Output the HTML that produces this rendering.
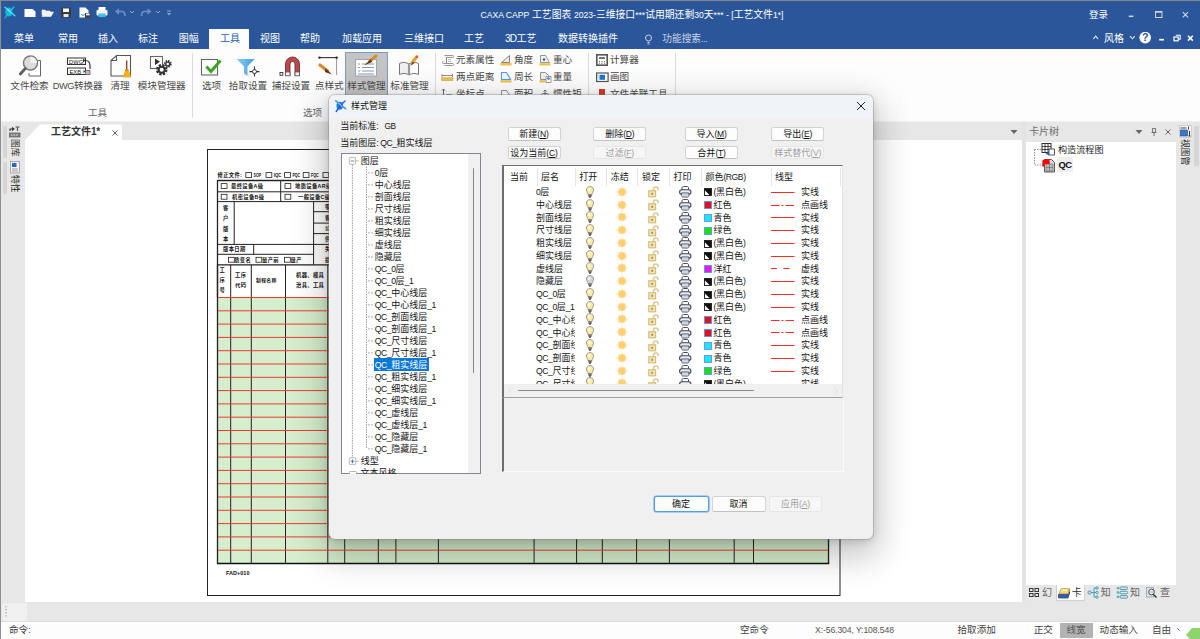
<!DOCTYPE html>
<html lang="zh"><head><meta charset="utf-8"><title>CAXA CAPP</title>
<style>
html,body{margin:0;padding:0}
body{width:1200px;height:639px;overflow:hidden;position:relative;background:#fff;
 font-family:"Liberation Sans","Noto Sans CJK SC",sans-serif;font-size:9.6px;color:#262626;line-height:12px}
div,span,svg{position:absolute;box-sizing:border-box}
.t{white-space:nowrap;line-height:12px;height:12px}
.w{color:#fff}
#title{left:0;top:0;width:1200px;height:49px;background:#2b579a}
#ribbon{left:0;top:49px;width:1200px;height:73px;background:#fdfdfd}
.rl{font-size:9.6px;color:#484848}
.rl i{font-size:.96em;letter-spacing:-.45px}
.gl{font-size:9.6px;color:#666}
.sep{width:1px;background:#dcdcdc}
#dlg{left:328px;top:94px;width:545px;height:445px;background:#f0f0f0;border-radius:6px;
 box-shadow:0 0 0 1px rgba(120,120,120,.32),0 12px 34px 5px rgba(0,0,0,.24),0 2px 9px rgba(0,0,0,.15)}
#dlgt{left:0;top:0;width:545px;height:23px;background:#f0f4f9;border-radius:6px 6px 0 0}
.d{font-size:9px;color:#151515}
.btn{height:14px;border:1px solid #d3d3d3;border-bottom-color:#c2c2c2;border-radius:2.5px;background:#fdfdfd;font-size:9px;color:#111;text-align:center;line-height:12px;white-space:nowrap}
.btn.dis{color:#a0a0a0;background:#f6f6f6;border-color:#e6e6e6}
.btn i{font-size:.95em;letter-spacing:-.2px}
.btn.def{border-color:#569ee0;box-shadow:0 0 0 .6px #6aaae6}
i{font-style:normal;font-size:.96em;letter-spacing:-.45px}
.ti i{font-size:.88em;letter-spacing:0}
.mn i{font-size:1em;letter-spacing:-.7px}
.nb i{font-size:1em;letter-spacing:-.3px}
.st i{font-size:.93em;letter-spacing:-.1px}
u{text-decoration:underline;text-decoration-thickness:.6px;text-underline-offset:1px}
</style></head><body>

<div id="title"></div>
<div class="" style="left:0px;top:0px;width:1200px;height:1px;background:#82878f"></div>
<span class="t w ti" style="left:480.5px;top:8.5px;font-size:9.8px;"><i>CAXA CAPP</i> 工艺图表 <i>2023-</i>三维接口<i>***</i>试用期还剩<i>30</i>天<i>*** - [</i>工艺文件<i>1*]</i></span>
<span class="t w" style="left:1089px;top:9px;font-size:9.6px;">登录</span>
<svg style="left:1120px;top:5px" width="80" height="20" viewBox="0 0 80 20"><g stroke="#d0d8e8" stroke-width="1" fill="none"><path d="M8.800 11.300h4.600" stroke-width="1.500"/><rect x="35.500" y="6.500" width="6.500" height="6"/><path d="M35.500 7h6.500" stroke-width="1.400"/><path d="M62.800 7.200l5.200 5.200M68 7.200l-5.200 5.200" stroke-width="1.100"/></g></svg>
<span class="t w mn" style="left:14px;top:33px;font-size:10px;">菜单</span>
<span class="t w mn" style="left:58px;top:33px;font-size:10px;">常用</span>
<span class="t w mn" style="left:98px;top:33px;font-size:10px;">插入</span>
<span class="t w mn" style="left:138px;top:33px;font-size:10px;">标注</span>
<span class="t w mn" style="left:178.8px;top:33px;font-size:10px;">图幅</span>
<span class="t w mn" style="left:260px;top:33px;font-size:10px;">视图</span>
<span class="t w mn" style="left:300px;top:33px;font-size:10px;">帮助</span>
<span class="t w mn" style="left:342px;top:33px;font-size:10px;">加载应用</span>
<span class="t w mn" style="left:404px;top:33px;font-size:10px;">三维接口</span>
<span class="t w mn" style="left:464px;top:33px;font-size:10px;">工艺</span>
<span class="t w mn" style="left:505px;top:33px;font-size:10px;"><i>3D</i>工艺</span>
<span class="t w mn" style="left:558px;top:33px;font-size:10px;">数据转换插件</span>
<div class="" style="left:209.4px;top:29.2px;width:39.2px;height:20px;background:#fdfdfd"></div>
<span class="t " style="left:220px;top:33.2px;font-size:10px;color:#2a62b8">工具</span>
<span class="t mn" style="left:662.3px;top:33px;font-size:9.7px;color:#c9d3e6">功能搜索<i>...</i></span>
<svg style="left:643px;top:33px" width="12" height="13" viewBox="0 0 12 13"><g stroke="#c9d3e6" fill="none" stroke-width="1"><circle cx="5.5" cy="5" r="3"/><path d="M4.5 9.5h2M4.5 11h2"/></g></svg>
<span class="t w" style="left:1104px;top:33px;font-size:10px;">风格</span>
<svg style="left:1088px;top:32px" width="112" height="16" viewBox="0 0 112 16"><g stroke="#e8edf6" fill="none" stroke-width="1.100"><path d="M5.300 7l2.400-2.800 2.400 2.800"/><path d="M42 4.200l2.400 2.600 2.400-2.600"/><path d="M71.200 7.700h4.700" stroke-width="1.700" stroke="#fff"/><rect x="86" y="5" width="4.200" height="3.800" stroke="#fff" stroke-width="1.200"/><path d="M87.800 3.300h4.400v4h-1.500" stroke="#fff"/><path d="M100 3.800l4.800 4.800M104.800 3.800l-4.800 4.800" stroke-width="1.500" stroke="#fff"/></g><circle cx="57.200" cy="5.600" r="5.800" fill="#fff"/><text x="57.200" y="9.300" text-anchor="middle" font-size="10.500" font-weight="bold" fill="#2b579a" font-family="Liberation Sans,sans-serif">?</text></svg>
<div id="ribbon"></div>
<div class="" style="left:0px;top:121px;width:1200px;height:1px;background:#f1f1f1"></div>
<svg style="left:0;top:0" width="180" height="30" viewBox="0 0 180 30">
<g>
<ellipse cx="8.8" cy="12" rx="3.6" ry="4.6" fill="#1cb4d4"/>
<path d="M5 7.2l9.800 8.600" stroke="#38e4f4" stroke-width="1.500" stroke-linecap="round"/>
<path d="M13.800 7l-4.500 5.500-4.300 5.300" stroke="#12c8e0" stroke-width="1.300" stroke-linecap="round" fill="none"/>
<path d="M7.500 9.500c1.500.5 2.500 1.500 3 3" stroke="#bff6fb" stroke-width=".9" fill="none"/>
<path d="M6 15.500l-1.200 2.300" stroke="#0a8fb0" stroke-width="1.200"/>

<path d="M24.500 9h8l3 2.500v5.500h-11z" fill="#fff"/>
<path d="M42 16.500l2-4.500h9.500l-2.500 4.500zM42 15v-5h3l1 1h4v1" fill="#f2f2f2" stroke="#f2f2f2" stroke-width=".6"/>
<rect x="61" y="7.500" width="10" height="10" rx="1" fill="#3a3a3a"/><rect x="63" y="8.500" width="6" height="3.500" fill="#fff"/><rect x="63.500" y="14" width="5" height="3" fill="#e8e8e8"/>
<path d="M79.500 7.500h6l3 3v7h-9z" fill="#fff"/><rect x="85" y="13" width="5.500" height="5" fill="#444"/><rect x="86" y="13.500" width="3.500" height="1.800" fill="#fff"/><path d="M81 14c1 1.500 2.500 1.500 4 .5" stroke="#2b7fd0" fill="none"/>
<rect x="98.500" y="7" width="7" height="4" fill="#fff"/><rect x="96.500" y="10" width="11" height="5.500" rx="1" fill="#f4f4f4"/><rect x="98.500" y="13.500" width="7" height="3.500" fill="#3fc1ea"/>
</g>
<g fill="none" stroke="#6f8fc2" stroke-width="1.6"><path d="M117 11.500h5c2.500 0 3 2 3 4.500"/><path d="M149.500 11.500h-5c-2.500 0-3 2-3 4.500"/></g>
<path d="M115 11.500l4-3.200v6.400z M151.500 11.500l-4-3.200v6.400z" fill="#6f8fc2"/>
<g fill="none" stroke="#8fa8d0" stroke-width="1"><path d="M130 11l2 2 2-2M156 11l2 2 2-2"/><path d="M167 11h4"/></g>
<path d="M167 13h4l-2 2.500z" fill="#8fa8d0"/>
</svg>
<div class="" style="left:345px;top:52.4px;width:42.6px;height:47px;background:#c4c4c4;border:1px solid #8299c0"></div>
<svg style="left:16.5px;top:52px" width="30" height="30" viewBox="0 0 30 30"><path d="M14.500 8.500h9v15.500h-11.500v-3" fill="#fff" stroke="#666" stroke-width="1"/><circle cx="13.500" cy="11" r="7" fill="#dcdcdc" stroke="#7a7a7a" stroke-width="1.500"/><path d="M13.500 4.500a6.500 6.500 0 0 1 6.500 6.500h-6.500z" fill="#f1f1f1"/><path d="M8.300 16.500l-5 5.500" stroke="#5f5f5f" stroke-width="2.800" stroke-linecap="round"/></svg>
<span class="t rl" style="left:-10.5px;top:79.600px;width:80px;text-align:center">文件检索</span>
<svg style="left:63.5px;top:52px" width="30" height="30" viewBox="0 0 30 30"><rect x="3.500" y="6" width="18" height="6.500" fill="#fff" stroke="#333"/><rect x="3.500" y="16" width="18" height="6.500" fill="#fff" stroke="#333"/><text x="5" y="11.500" font-size="5.800" fill="#222" font-family="Liberation Sans,sans-serif">DWG</text><text x="5.500" y="21.500" font-size="5.800" fill="#222" font-family="Liberation Sans,sans-serif">EXB</text><path d="M21.500 8.500c3.500 0 4.500 2.500 4.500 5.500v3" fill="none" stroke="#333" stroke-width="1.200"/><path d="M19 6.500l2.500 2-2.500 2z" fill="#333"/><path d="M21.500 18.500h4.500v4h-4.500" fill="#bbb" stroke="#555" stroke-width=".8"/><path d="M19.500 18l2 1.500-2 1.500" fill="#333"/></svg>
<span class="t rl" style="left:37.7px;top:79.600px;width:80px;text-align:center"><i>DWG</i>转换器</span>
<svg style="left:105.5px;top:52px" width="30" height="30" viewBox="0 0 30 30"><path d="M5 24v-15.500l5.500-5h14v20.500z" fill="#fff" stroke="#555" stroke-width="1.100"/><path d="M5 8.500h5.500v-5" fill="none" stroke="#555" stroke-width="1.100"/><path d="M20.700 8.500v9" stroke="#8a3a1a" stroke-width="1.300"/><path d="M17 25.500l2.200-8.200h3l3.200 8.200z" fill="#f2b01e"/><path d="M19.200 17.300h3l.6 1.600h-4z" fill="#d98c14"/></svg>
<span class="t rl" style="left:80px;top:79.600px;width:80px;text-align:center">清理</span>
<svg style="left:146px;top:52px" width="30" height="30" viewBox="0 0 30 30"><rect x="4.500" y="4.500" width="12" height="12" fill="#fff" stroke="#666" stroke-width="1.100"/><path d="M9 6.500v6.500l5-3.200z" fill="#333"/><circle cx="15.700" cy="17.700" r="5.300" fill="#fff"/><circle cx="15.700" cy="17.700" r="4.600" fill="none" stroke="#333" stroke-width="2.400" stroke-dasharray="2.300 1.310"/><circle cx="15.700" cy="17.700" r="3" fill="none" stroke="#333" stroke-width="1.900"/><circle cx="21.700" cy="12" r="3.800" fill="#fff"/><circle cx="21.700" cy="12" r="3.100" fill="none" stroke="#333" stroke-width="1.700" stroke-dasharray="1.500 .930"/><circle cx="21.700" cy="12" r="1.900" fill="none" stroke="#333" stroke-width="1.300"/></svg>
<span class="t rl" style="left:121.69999999999999px;top:79.600px;width:80px;text-align:center">模块管理器</span>
<svg style="left:197px;top:54px" width="30" height="30" viewBox="0 0 30 30"><rect x="4.500" y="5.500" width="16" height="15.500" fill="#fff" stroke="#666" stroke-width="1.100"/><path d="M9.400 12.500l4.600 5 9.500-11" fill="none" stroke="#3aa520" stroke-width="3"/></svg>
<span class="t rl" style="left:171.5px;top:79.600px;width:80px;text-align:center">选项</span>
<svg style="left:232.5px;top:54px" width="30" height="30" viewBox="0 0 30 30"><defs><linearGradient id="fg" x1="0" y1="0" x2="1" y2="0"><stop offset="0" stop-color="#8fd0f0"/><stop offset="1" stop-color="#3e9fd8"/></linearGradient></defs><path d="M3.500 5h18l-7 7.500v9.500l-3.500-2.500v-7z" fill="url(#fg)"/><path d="M21.500 12.500v10M16.500 17.600h10" stroke="#333" stroke-width="1.100"/><circle cx="21.500" cy="17.600" r="2" fill="#fff" stroke="#333" stroke-width="1"/></svg>
<span class="t rl" style="left:208px;top:79.600px;width:80px;text-align:center">拾取设置</span>
<svg style="left:274px;top:54px" width="30" height="30" viewBox="0 0 30 30"><path d="M11.500 21.500v-11.500a7 7 0 0 1 14 0v11.500h-4.500v-11.500a2.500 2.500 0 0 0-5 0v11.500z" fill="#b9494f" stroke="#7a2a30" stroke-width=".9"/><rect x="11.500" y="18" width="4.500" height="3.800" fill="#f6f6f6" stroke="#555" stroke-width=".8"/><rect x="21" y="18" width="4.500" height="3.800" fill="#f6f6f6" stroke="#555" stroke-width=".8"/><rect x="6" y="18.500" width="2.800" height="2.800" fill="#fff" stroke="#333" stroke-width=".9"/></svg>
<span class="t rl" style="left:251px;top:79.600px;width:80px;text-align:center">捕捉设置</span>
<svg style="left:314px;top:54px" width="30" height="30" viewBox="0 0 30 30"><path d="M5 3.600h17.600" fill="none" stroke="#333" stroke-width="1.100"/><path d="M22.600 3.600v17.500" stroke="#999" stroke-width="1"/><circle cx="5.500" cy="3.600" r="1.200" fill="#222"/><circle cx="22.600" cy="3.600" r="1.200" fill="#222"/><path d="M6 11l7.500 6" stroke="#d98a2a" stroke-width="3.200" stroke-linecap="round"/><path d="M11.500 14l6.500 6.500-7-2.500z" fill="#6a3510"/></svg>
<span class="t rl" style="left:289.2px;top:79.600px;width:80px;text-align:center">点样式</span>
<svg style="left:351px;top:54px" width="30" height="30" viewBox="0 0 30 30"><rect x="4.500" y="5.500" width="21" height="16.500" fill="#fff" stroke="#98a4b8" stroke-width="1"/><path d="M7 10h2M7 13.500h2M7 17h2M11 10h12M11 13.500h12M11 17h12M7 20h16" stroke="#8a98ad" stroke-width="1"/><path d="M25 1.800l-6.500 5.800" stroke="#d98a2a" stroke-width="3" stroke-linecap="round"/><path d="M20 5l-7 6.500 8-3.500z" fill="#6a3510"/></svg>
<span class="t rl" style="left:326.5px;top:79.600px;width:80px;text-align:center">样式管理</span>
<svg style="left:395.5px;top:54px" width="30" height="30" viewBox="0 0 30 30"><path d="M3.500 9.500c3-1.500 6.500-1.500 9.500.5v11c-3-2-6.500-2-9.500-.5z" fill="#f1f1f1" stroke="#777"/><path d="M22.500 9.500c-3-1.500-6.500-1.500-9.500.5v11c3-2 6.500-2 9.500-.5z" fill="#fff" stroke="#777"/><path d="M13 12v9" stroke="#999" stroke-width="2.200"/><path d="M20.500 3l-4.500 6" stroke="#e5a32e" stroke-width="3.200" stroke-linecap="round"/><path d="M16.800 7.500l-2.800 4.500 4.500-2.800z" fill="#555"/><circle cx="21" cy="2.700" r="1.300" fill="#d85a4a"/></svg>
<span class="t rl" style="left:369.5px;top:79.600px;width:80px;text-align:center">标准管理</span>
<span class="t gl" style="left:88px;top:106.800px">工具</span>
<span class="t gl" style="left:303px;top:106.800px">选项</span>
<div class="sep" style="left:192px;top:53px;width:1px;height:65px;"></div>
<div class="sep" style="left:434.5px;top:53px;width:1px;height:65px;"></div>
<div class="sep" style="left:588.3px;top:53px;width:1px;height:65px;"></div>
<div class="sep" style="left:675px;top:53px;width:1px;height:65px;"></div>
<svg style="left:442px;top:54.4px" width="13" height="12" viewBox="0 0 13 12"><path d="M2.500 1.500h8c1.500 0 1.500 2 0 2h-6v6h-3c-1.500 0-1.500-2 0-2" fill="#f6f6f6" stroke="#888" stroke-width=".9"/><path d="M4.500 3.500v6h6c1.500 0 1.500 2 0 2h-8" fill="none" stroke="#888" stroke-width=".9"/><path d="M6 5.500h3M6 7.500h3" stroke="#aaa" stroke-width=".8"/></svg>
<span class="t rl" style="left:456px;top:54.4px">元素属性</span>
<svg style="left:500px;top:54.4px" width="13" height="12" viewBox="0 0 13 12"><path d="M1.500 8.500l8-7v7z" fill="#eee" stroke="#777" stroke-width=".9"/><rect x=".5" y="9" width="11" height="2.500" fill="#f0c04a"/></svg>
<span class="t rl" style="left:514px;top:54.4px">角度</span>
<svg style="left:539px;top:54.4px" width="13" height="12" viewBox="0 0 13 12"><path d="M1.500 8.500v-7h5l4 7z" fill="#f4f4f4" stroke="#888" stroke-width=".9"/><circle cx="5" cy="5.500" r="1.200" fill="#1a5fb4"/><rect x=".5" y="9.200" width="11" height="2.300" fill="#f0c04a"/></svg>
<span class="t rl" style="left:553px;top:54.4px">重心</span>
<svg style="left:441px;top:70.7px" width="13" height="12" viewBox="0 0 13 12"><rect x=".5" y="6.800" width="11.500" height="2.800" fill="#f0c04a" stroke="#c89a30" stroke-width=".5"/><path d="M1 4.500h10.500M1 3v3M11.500 3v3" stroke="#777" stroke-width=".8"/></svg>
<span class="t rl" style="left:456px;top:70.7px">两点距离</span>
<svg style="left:500px;top:70.7px" width="13" height="12" viewBox="0 0 13 12"><path d="M1.500 8.500v-7h5l4 7z" fill="#f2f8ff" stroke="#4f9cf0" stroke-width="1.100"/><rect x=".5" y="9.200" width="11" height="2.300" fill="#f0c04a"/></svg>
<span class="t rl" style="left:514px;top:70.7px">周长</span>
<svg style="left:539px;top:70.7px" width="13" height="12" viewBox="0 0 13 12"><path d="M1.500 8.500v-7h5l4 4v3z" fill="#eee" stroke="#888" stroke-width=".9"/><rect x="7" y="5.500" width="5" height="6" fill="#fff" stroke="#777" stroke-width=".7"/><circle cx="9.500" cy="7.500" r="1.300" fill="#2a7fd6"/><rect x=".5" y="9.200" width="6" height="2.300" fill="#f0c04a"/></svg>
<span class="t rl" style="left:553px;top:70.7px">重量</span>
<svg style="left:441px;top:87.6px" width="13" height="12" viewBox="0 0 13 12"><path d="M2.500 1v10M1 2.500l1.500-1.500 1.500 1.500" fill="none" stroke="#555" stroke-width=".9"/><rect x="5.500" y="6.500" width="5" height="3" fill="#8aa" stroke="#777" stroke-width=".6"/></svg>
<span class="t rl" style="left:456px;top:87.6px">坐标点</span>
<svg style="left:500px;top:87.6px" width="13" height="12" viewBox="0 0 13 12"><path d="M1.500 10.500v-8h5l4 6v2" fill="#fff" stroke="#888" stroke-width=".9"/></svg>
<span class="t rl" style="left:514px;top:87.6px">面积</span>
<svg style="left:539px;top:87.6px" width="13" height="12" viewBox="0 0 13 12"><ellipse cx="6" cy="8" rx="4.500" ry="2.500" fill="none" stroke="#666" stroke-width=".9"/><path d="M6 2v6M4.500 3.500l1.500-1.500 1.500 1.500" fill="none" stroke="#666" stroke-width=".9"/></svg>
<span class="t rl" style="left:553px;top:87.6px">惯性矩</span>
<svg style="left:596px;top:54.4px" width="13" height="12" viewBox="0 0 13 12"><rect x=".8" y=".8" width="10.400" height="10.400" fill="#fff" stroke="#555" stroke-width="1.600"/><rect x="3" y="3" width="6" height="2" fill="#777"/><path d="M3.500 7v3M6 7v3M8.500 7v3" stroke="#777" stroke-width="1.200" stroke-dasharray="1 .8"/></svg>
<span class="t rl" style="left:610px;top:54.4px">计算器</span>
<svg style="left:596px;top:70.7px" width="13" height="12" viewBox="0 0 13 12"><rect x=".6" y="2" width="11.500" height="8.500" fill="#fff" stroke="#555" stroke-width="1.200"/><rect x="3.500" y="3.800" width="5.500" height="5" fill="#1878d8"/><path d="M2 4v4.500" stroke="#888" stroke-width=".8" stroke-dasharray="1 1"/></svg>
<span class="t rl" style="left:610px;top:70.7px">画图</span>
<svg style="left:596px;top:87.6px" width="13" height="12" viewBox="0 0 13 12"><rect x="3" y="1" width="6" height="6" fill="#d83a2a"/><path d="M1 11l3-4 3 3 2-2 3 3z" fill="#3a9a3a"/><path d="M3 9l7 2" stroke="#2a6fd0" stroke-width="1.200"/></svg>
<span class="t rl" style="left:610px;top:87.6px">文件关联工具</span>
<div class="" style="left:0px;top:122px;width:1200px;height:480px;background:#e7e7e7"></div>
<div class="" style="left:0px;top:0px;width:1px;height:639px;background:#8f8f8f"></div>
<div class="" style="left:2.5px;top:125.5px;width:4px;height:32px;background:#d6d6d6"></div>
<div class="" style="left:2.5px;top:161.5px;width:4px;height:32px;background:#d6d6d6"></div>
<svg style="left:8px;top:125px" width="14" height="14" viewBox="0 0 14 14"><path d="M2 6v-2h3M4 2.500l2 1.500-2 1.500" fill="none" stroke="#333" stroke-width="1.100"/><path d="M7.500 2h4M9.500 2v4" stroke="#555" stroke-width="1.200"/><rect x="1.500" y="8" width="10.500" height="4" fill="#888" stroke="#555" stroke-width=".7"/><path d="M3 10h7" stroke="#ddd" stroke-width="1" stroke-dasharray="1.500 1"/></svg>
<span class="t" style="left:20.300px;top:138.800px;line-height:11px;height:11px;font-size:8.800px;transform:rotate(90deg);transform-origin:0 0;color:#1c1c1c">图库</span>
<svg style="left:10px;top:161px" width="11" height="13" viewBox="0 0 11 13"><rect x=".5" y=".5" width="9" height="11.500" fill="#f4f4f4" stroke="#999" stroke-width=".8"/><rect x="2" y="2" width="4.500" height="4" fill="#2a66c8"/><path d="M2 8h6M2 10h6" stroke="#888" stroke-width=".8"/></svg>
<span class="t" style="left:20.300px;top:174.500px;line-height:11px;height:11px;font-size:8.800px;transform:rotate(90deg);transform-origin:0 0;color:#1c1c1c">特性</span>
<div class="" style="left:25px;top:122px;width:996.5px;height:18px;background:#e7e7e7"></div>
<svg style="left:25px;top:124px" width="98" height="16" viewBox="0 0 98 16"><path d="M0 16L15 0.500H95.500q1.500 0 1.500 1.500V16z" fill="#fff"/></svg>
<span class="t nb" style="left:51px;top:126px;font-size:10px;font-weight:bold;color:#333">工艺文件<i>1*</i></span>
<svg style="left:111px;top:129px" width="8" height="8" viewBox="0 0 8 8"><path d="M1.500 1.500l5 5M6.500 1.500l-5 5" stroke="#666" stroke-width="1"/></svg>
<svg style="left:1010px;top:129px" width="8" height="6" viewBox="0 0 8 6"><path d="M.5 1h7l-3.500 4z" fill="#666"/></svg>
<div class="" style="left:25px;top:140px;width:996.5px;height:462px;background:#fff"></div>
<svg style="left:0;top:0" width="1200" height="639" viewBox="0 0 1200 639" font-family="Liberation Sans,Noto Sans CJK SC,sans-serif">
<rect x="207.500" y="149.500" width="632.500" height="446" fill="#fff" stroke="#222" stroke-width="1"/>
<rect x="217.500" y="297.5" width="612" height="266.0" fill="#d6eecd"/>
<path d="M217.5 264.800V563.5" stroke="#222" stroke-width="1.3"/>
<path d="M230.7 264.800V563.5" stroke="#222" stroke-width="1"/>
<path d="M251.3 264.800V563.5" stroke="#222" stroke-width="1"/>
<path d="M285.5 264.800V563.5" stroke="#222" stroke-width="1"/>
<path d="M327.8 264.800V563.5" stroke="#222" stroke-width="1"/>
<path d="M344.7 264.800V563.5" stroke="#222" stroke-width="1"/>
<path d="M378.3 264.800V563.5" stroke="#222" stroke-width="1"/>
<path d="M395.9 264.800V563.5" stroke="#222" stroke-width="1"/>
<path d="M438.4 264.800V563.5" stroke="#222" stroke-width="1"/>
<path d="M534.1 264.800V563.5" stroke="#222" stroke-width="1"/>
<path d="M576.6 264.800V563.5" stroke="#222" stroke-width="1"/>
<path d="M602.3 264.800V563.5" stroke="#222" stroke-width="1"/>
<path d="M636.6 264.800V563.5" stroke="#222" stroke-width="1"/>
<path d="M669.4 264.800V563.5" stroke="#222" stroke-width="1"/>
<path d="M734.2 264.800V563.5" stroke="#222" stroke-width="1"/>
<path d="M753.5 264.800V563.5" stroke="#222" stroke-width="1"/>
<path d="M828.5 264.800V563.5" stroke="#222" stroke-width="1.3"/>
<path d="M218 310.8H828" stroke="#ee3a2c" stroke-width="1"/>
<path d="M218 324.1H828" stroke="#ee3a2c" stroke-width="1"/>
<path d="M218 337.4H828" stroke="#ee3a2c" stroke-width="1"/>
<path d="M218 350.7H828" stroke="#ee3a2c" stroke-width="1"/>
<path d="M218 364.0H828" stroke="#ee3a2c" stroke-width="1"/>
<path d="M218 377.3H828" stroke="#ee3a2c" stroke-width="1"/>
<path d="M218 390.6H828" stroke="#ee3a2c" stroke-width="1"/>
<path d="M218 403.9H828" stroke="#ee3a2c" stroke-width="1"/>
<path d="M218 417.2H828" stroke="#ee3a2c" stroke-width="1"/>
<path d="M218 430.5H828" stroke="#ee3a2c" stroke-width="1"/>
<path d="M218 443.8H828" stroke="#ee3a2c" stroke-width="1"/>
<path d="M218 457.1H828" stroke="#ee3a2c" stroke-width="1"/>
<path d="M218 470.4H828" stroke="#ee3a2c" stroke-width="1"/>
<path d="M218 483.7H828" stroke="#ee3a2c" stroke-width="1"/>
<path d="M218 497.0H828" stroke="#ee3a2c" stroke-width="1"/>
<path d="M218 510.3H828" stroke="#ee3a2c" stroke-width="1"/>
<path d="M218 523.6H828" stroke="#ee3a2c" stroke-width="1"/>
<path d="M218 536.9H828" stroke="#ee3a2c" stroke-width="1"/>
<path d="M218 550.2H828" stroke="#ee3a2c" stroke-width="1"/>
<path d="M216.900 563.5H829.200" stroke="#111" stroke-width="1.400"/>
<path d="M217.500 180.500H829.500" stroke="#222" stroke-width="1.3" fill="none"/>
<path d="M217.500 180V297.500" stroke="#222" stroke-width="1.3" fill="none"/>
<path d="M829.300 180V297.500" stroke="#222" stroke-width="1.3" fill="none"/>
<path d="M217.500 191.800H829.500" stroke="#222" stroke-width="1" fill="none"/>
<path d="M217.500 201.600H829.500" stroke="#222" stroke-width="1" fill="none"/>
<path d="M280.700 180.500V201.600" stroke="#222" stroke-width="1" fill="none"/>
<path d="M234.200 201.600V244.400" stroke="#222" stroke-width="1" fill="none"/>
<path d="M313.600 201.600V264.800" stroke="#222" stroke-width="1" fill="none"/>
<path d="M217.500 244.400H313.600" stroke="#222" stroke-width="1" fill="none"/>
<path d="M217.500 254.300H313.600" stroke="#222" stroke-width="1" fill="none"/>
<path d="M253.700 244.400V254.300" stroke="#222" stroke-width="1" fill="none"/>
<path d="M217.500 264.800H829.500" stroke="#222" stroke-width="1.2" fill="none"/>
<path d="M218 297.5H828" stroke="#ee3a2c" stroke-width="1"/>
<path d="M313.600 211.7H829.500" stroke="#222" stroke-width="1" fill="none"/>
<path d="M313.600 223.1H829.500" stroke="#222" stroke-width="1" fill="none"/>
<path d="M313.600 233.6H829.500" stroke="#222" stroke-width="1" fill="none"/>
<path d="M313.600 244.4H829.500" stroke="#222" stroke-width="1" fill="none"/>
<text x="217.5" y="177" font-size="5.3" font-weight="bold" fill="#111" letter-spacing=".35">修正文件:</text>
<rect x="245.8" y="172.6" width="5.8" height="4.8999999999999995" fill="#fff" stroke="#222" stroke-width=".8"/>
<text x="253.60000000000002" y="177.4" font-size="5.4" font-weight="bold" fill="#111" textLength="7.600" lengthAdjust="spacingAndGlyphs">SOP</text>
<rect x="266" y="172.6" width="5.8" height="4.8999999999999995" fill="#fff" stroke="#222" stroke-width=".8"/>
<text x="273.8" y="177.4" font-size="5.4" font-weight="bold" fill="#111" textLength="7.600" lengthAdjust="spacingAndGlyphs">IQC</text>
<rect x="284.6" y="172.6" width="5.8" height="4.8999999999999995" fill="#fff" stroke="#222" stroke-width=".8"/>
<text x="292.40000000000003" y="177.4" font-size="5.4" font-weight="bold" fill="#111" textLength="7.600" lengthAdjust="spacingAndGlyphs">PQC</text>
<rect x="303.2" y="172.6" width="5.8" height="4.8999999999999995" fill="#fff" stroke="#222" stroke-width=".8"/>
<text x="311.0" y="177.4" font-size="5.4" font-weight="bold" fill="#111" textLength="7.600" lengthAdjust="spacingAndGlyphs">FQC</text>
<rect x="323" y="172.6" width="5.8" height="4.8999999999999995" fill="#fff" stroke="#222" stroke-width=".8"/>
<text x="330.8" y="177.4" font-size="5.4" font-weight="bold" fill="#111" textLength="7.600" lengthAdjust="spacingAndGlyphs">OQC</text>
<rect x="221.2" y="183.6" width="5.8" height="4.8999999999999995" fill="#fff" stroke="#222" stroke-width=".8"/>
<text x="231" y="188.3" font-size="5.3" font-weight="bold" fill="#111" letter-spacing=".35">最终设备A级</text>
<rect x="285" y="183.6" width="5.8" height="4.8999999999999995" fill="#fff" stroke="#222" stroke-width=".8"/>
<text x="295" y="188.3" font-size="5.3" font-weight="bold" fill="#111" letter-spacing=".35">地质设备AR级</text>
<rect x="221.2" y="194.3" width="5.8" height="4.8999999999999995" fill="#fff" stroke="#222" stroke-width=".8"/>
<text x="232" y="198.9" font-size="5.3" font-weight="bold" fill="#111" letter-spacing=".35">机密设备B级</text>
<rect x="285" y="194.3" width="5.8" height="4.8999999999999995" fill="#fff" stroke="#222" stroke-width=".8"/>
<text x="298" y="198.9" font-size="5.3" font-weight="bold" fill="#111" letter-spacing=".35">一般设备C级</text>
<text x="223" y="209.5" font-size="5.3" font-weight="bold" fill="#111" letter-spacing=".35">客</text>
<text x="223" y="220.0" font-size="5.3" font-weight="bold" fill="#111" letter-spacing=".35">户</text>
<text x="223" y="230.5" font-size="5.3" font-weight="bold" fill="#111" letter-spacing=".35">版</text>
<text x="223" y="241.0" font-size="5.3" font-weight="bold" fill="#111" letter-spacing=".35">本</text>
<text x="325" y="209.0" font-size="5.3" font-weight="bold" fill="#111" letter-spacing=".35">零</text>
<text x="325" y="219.5" font-size="5.3" font-weight="bold" fill="#111" letter-spacing=".35">客</text>
<text x="325" y="230.0" font-size="5.3" font-weight="bold" fill="#111" letter-spacing=".35">公</text>
<text x="325" y="240.5" font-size="5.3" font-weight="bold" fill="#111" letter-spacing=".35">供</text>
<text x="223" y="251.4" font-size="5.3" font-weight="bold" fill="#111" letter-spacing=".35">版本日期</text>
<text x="325" y="251" font-size="5.3" font-weight="bold" fill="#111" letter-spacing=".35">失</text>
<text x="325" y="261.5" font-size="5.3" font-weight="bold" fill="#111" letter-spacing=".35">损</text>
<rect x="228.5" y="257.3" width="5.8" height="4.8999999999999995" fill="#fff" stroke="#222" stroke-width=".8"/>
<text x="234.2" y="261.7" font-size="5.3" font-weight="bold" fill="#111" letter-spacing=".35">质变名</text>
<rect x="256" y="257.3" width="5.8" height="4.8999999999999995" fill="#fff" stroke="#222" stroke-width=".8"/>
<text x="262" y="261.7" font-size="5.3" font-weight="bold" fill="#111" letter-spacing=".35">量产前</text>
<rect x="284.5" y="257.3" width="5.8" height="4.8999999999999995" fill="#fff" stroke="#222" stroke-width=".8"/>
<text x="290.5" y="261.7" font-size="5.3" font-weight="bold" fill="#111" letter-spacing=".35">量产</text>
<text x="219.5" y="272" font-size="5.3" font-weight="bold" fill="#111" letter-spacing=".35">工</text>
<text x="219.5" y="282" font-size="5.3" font-weight="bold" fill="#111" letter-spacing=".35">序</text>
<text x="219.5" y="292" font-size="5.3" font-weight="bold" fill="#111" letter-spacing=".35">号</text>
<text x="235" y="276.5" font-size="5.3" font-weight="bold" fill="#111" letter-spacing=".35">工序</text>
<text x="235" y="287" font-size="5.3" font-weight="bold" fill="#111" letter-spacing=".35">代码</text>
<text x="256" y="282" font-size="4.8" font-weight="bold" fill="#111" letter-spacing=".35">制程名称</text>
<text x="296" y="276.5" font-size="5.3" font-weight="bold" fill="#111" letter-spacing=".35">机器、模具</text>
<text x="296" y="287" font-size="5.3" font-weight="bold" fill="#111" letter-spacing=".35">治具、工具</text>
<text x="226" y="574.5" font-size="5.6" font-weight="bold" fill="#111" textLength="23.500" lengthAdjust="spacingAndGlyphs">FAD+010</text>
</svg>
<div class="" style="left:1021.5px;top:122px;width:4.5px;height:480px;background:#e3e3e3"></div>
<div class="" style="left:1026px;top:122px;width:150px;height:20px;background:#e7e7e7"></div>
<span class="t " style="left:1029px;top:126px;font-size:10px;color:#6c6c6c">卡片树</span>
<svg style="left:1130px;top:126px" width="46" height="12" viewBox="0 0 46 12"><path d="M5.500 4h7l-3.500 4z" fill="#666"/><path d="M22.500 2.500h3v4h-3zM21.500 6.500h5M24 6.500v3.500" fill="none" stroke="#666" stroke-width=".9"/><path d="M35.500 3.500l5 5M40.500 3.500l-5 5" stroke="#666" stroke-width="1"/></svg>
<div class="" style="left:1026px;top:141.5px;width:150px;height:443.5px;background:#fff"></div>
<svg style="left:1030px;top:142px" width="30" height="32" viewBox="0 0 30 32">
<path d="M4.500 7.500h7M4.500 7.500v15.500h7" fill="none" stroke="#8a8a8a" stroke-width="1" stroke-dasharray="1.300 1.300"/>
<g><rect x="12" y="1.500" width="9" height="9" fill="#fff" stroke="#333" stroke-width="1"/><path d="M12 4.500h9M12 7.500h9M15 1.500v9M18 1.500v9" stroke="#333" stroke-width=".9"/><rect x="19" y="7" width="5.500" height="6" fill="#fff" stroke="#333" stroke-width=".8"/><path d="M15.500 11.500l3.500-2v4z" fill="#1a58c8"/></g>
<g><path d="M14.500 17.500h7l3 3v9.500h-10z" fill="#ddd" stroke="#444" stroke-width=".9"/><rect x="16" y="22" width="7" height="7" fill="#bbb" stroke="#666" stroke-width=".6"/><path d="M16 25.500h7M19.500 22v7" stroke="#666" stroke-width=".6"/><path d="M12.300 24.500v-5c0-1.200.8-2 2-2h3.500c1.200 0 2 .8 2 2v2.500h-3.300c-1.200 0-1.800.6-1.800 1.800v.7z" fill="#f40a0a"/></g>
</svg>
<span class="t " style="left:1058px;top:143.6px;font-size:9.1px;color:#222">构造流程图</span>
<div class="" style="left:1056.7px;top:157px;width:16.3px;height:14.7px;background:#efefef"></div>
<span class="t " style="left:1058.5px;top:158.5px;font-size:9.8px;color:#111;font-weight:bold"><i>QC</i></span>
<div class="" style="left:1026px;top:585px;width:150px;height:17px;background:#e7e7e7"></div>
<div class="" style="left:1055.5px;top:585px;width:29px;height:16px;background:#fff;border:1px solid #d0d0d0;border-top:none"></div>
<svg style="left:1026px;top:585px" width="150" height="16" viewBox="0 0 150 16">
<g fill="none" stroke="#333" stroke-width="1"><rect x="3.500" y="3.500" width="3.500" height="3"/><rect x="9" y="3.500" width="3.500" height="3"/><rect x="3.500" y="8.500" width="3.500" height="3"/><rect x="9" y="8.500" width="3.500" height="3"/></g>
<g><path d="M33 9l2-4.500h9l-2 4.500z" fill="#f5d77a" stroke="#a88a2a" stroke-width=".7"/><path d="M34 6.500l1.500-3h8l-1.500 3" fill="#f9e6a0" stroke="#a88a2a" stroke-width=".6"/><path d="M32.500 9.500h9.500v3.500h-9.500z" fill="#3a62a8" stroke="#1f3f78" stroke-width=".7"/><path d="M42 9.500l2-4.500v3.500l-2 4.500z" fill="#2a4f90"/></g>
<g fill="none" stroke="#4a9ab8" stroke-width="1"><rect x="62" y="6" width="3" height="3" rx="1"/><path d="M65 7.500h3M68 3v9M68 3h2M68 7.500h2M68 12h2"/><circle cx="71" cy="3" r="1.200"/><circle cx="71" cy="7.500" r="1.200"/><circle cx="71" cy="12" r="1.200"/></g>
<g fill="none" stroke="#4a9ab8" stroke-width="1"><rect x="94" y="2" width="7.500" height="2.500" rx="1"/><rect x="94" y="6.300" width="7.500" height="2.500" rx="1"/><rect x="94" y="10.600" width="7.500" height="2.500" rx="1"/><circle cx="92" cy="3.200" r=".9"/><circle cx="92" cy="7.500" r=".9"/><circle cx="92" cy="11.800" r=".9"/></g>
<g><rect x="120.500" y="2.500" width="7" height="9.500" fill="#dde3ea" stroke="#8a96a8" stroke-width=".7"/><circle cx="125.500" cy="7" r="2.800" fill="#fff" stroke="#444" stroke-width="1"/><path d="M127.500 9.500l3 3" stroke="#333" stroke-width="1.500"/><path d="M124 7h3" stroke="#4a9ab8" stroke-width=".8"/></g>
</svg>
<span class="t " style="left:1042px;top:587px;font-size:10px;color:#666">幻</span>
<span class="t " style="left:1071.8px;top:587px;font-size:10px;color:#333">卡</span>
<span class="t " style="left:1100.8px;top:587px;font-size:10px;color:#666">知</span>
<span class="t " style="left:1130px;top:587px;font-size:10px;color:#666">知</span>
<span class="t " style="left:1160px;top:587px;font-size:10px;color:#666">查</span>
<div class="" style="left:1176px;top:122px;width:24px;height:480px;background:#e7e7e7"></div>
<div class="" style="left:1194px;top:125.5px;width:5px;height:40px;background:#d6d6d6"></div>
<svg style="left:1179px;top:125px" width="13" height="13" viewBox="0 0 13 13"><rect x=".5" y=".5" width="12" height="12" fill="#f8f8f8" stroke="#bbb" stroke-width=".6"/><path d="M1.500 3h6M9.500 1.500v3" stroke="#444" stroke-width="1"/><rect x="1.500" y="5" width="7" height="6" fill="#3d78c8" stroke="#2a4f90" stroke-width=".7"/><path d="M10.500 6v5M9.500 11h2" stroke="#333" stroke-width="1"/></svg>
<span class="t" style="left:1189.500px;top:138.500px;line-height:11px;height:11px;font-size:8.800px;transform:rotate(90deg);transform-origin:0 0;color:#1c1c1c">视图管</span>
<div class="" style="left:0px;top:602px;width:1200px;height:20px;background:#e7e7e7"></div>
<div class="" style="left:2px;top:602.5px;width:25px;height:19px;background:#f0f0f0;border-radius:2px 0 0 2px"></div>
<div class="" style="left:0px;top:620.8px;width:1200px;height:1px;background:#dfdfdf"></div>
<svg style="left:4px;top:605px" width="4" height="14" viewBox="0 0 4 14"><path d="M2 1v12" stroke="#b4b4b4" stroke-width="1.600" stroke-dasharray="1.200 1.900"/></svg>
<div class="" style="left:0px;top:621.7px;width:1200px;height:17.3px;background:#fdfdfd"></div>
<div class="" style="left:1060px;top:623.2px;width:32.5px;height:15px;background:#b3b3b3"></div>
<span class="t st" style="left:9px;top:624px;font-size:9.6px;color:#333">命令<i>:</i></span>
<span class="t st" style="left:740px;top:624px;font-size:9.6px;color:#444">空命令</span>
<span class="t st" style="left:815px;top:624px;font-size:9.3px;color:#555"><i>X:-56.304, Y:108.548</i></span>
<span class="t st" style="left:957.5px;top:624px;font-size:9.6px;color:#444">拾取添加</span>
<span class="t st" style="left:1033.7px;top:624px;font-size:9.6px;color:#444">正交</span>
<span class="t st" style="left:1066.5px;top:624px;font-size:9.6px;color:#555">线宽</span>
<span class="t st" style="left:1099.6px;top:624px;font-size:9.6px;color:#444">动态输入</span>
<span class="t st" style="left:1152px;top:624px;font-size:9.6px;color:#444">自由</span>
<svg style="left:1174px;top:622px" width="26" height="17" viewBox="0 0 26 17"><path d="M3.500 6.500l2 2" stroke="#555" stroke-width="1" fill="none"/><path d="M12 13l6-7h8v11h-10z" fill="#8fd36c"/></svg>
<div id="dlg" style="left:328.8px;top:95px;width:544.2px;height:444px"><div id="dlgt" style="width:544.2px"></div></div>
<svg style="left:334px;top:99px" width="14" height="14" viewBox="0 0 14 14"><ellipse cx="5.800" cy="6.800" rx="3.300" ry="4" fill="#2a7ae0"/><path d="M1.800 1.800l10 8" stroke="#3a9af0" stroke-width="1.500" stroke-linecap="round"/><path d="M11 2l-4.500 4.500-4.300 6" stroke="#1a5fd0" stroke-width="1.400" stroke-linecap="round" fill="none"/><path d="M4.500 4.500c1.500.3 2.500 1.300 3 2.800" stroke="#cfe6ff" stroke-width=".9" fill="none"/></svg>
<span class="t d" style="left:351px;top:99.5px;">样式管理</span>
<svg style="left:856.300px;top:101px" width="10" height="10" viewBox="0 0 10 10"><path d="M1 1l8 8M9 1l-8 8" stroke="#222" stroke-width="1"/></svg>
<span class="t d" style="left:340.3px;top:119.5px;font-size:9px;">当前标准<i>:</i></span>
<span class="t d" style="left:384.6px;top:119.5px;font-size:8.6px;"><i>GB</i></span>
<span class="t d" style="left:340.3px;top:137.3px;">当前图层<i>: QC_</i>粗实线层</span>
<div class="" style="left:341.3px;top:153.2px;width:139.7px;height:320.5px;background:#fff;border:1px solid #828790"></div>
<div class="" style="left:467.5px;top:154.2px;width:12.5px;height:318.5px;background:#f0f0f0"></div>
<div class="" style="left:472.8px;top:167.5px;width:1.6px;height:205px;background:#868686;border-radius:1px"></div>
<svg style="left:342px;top:154px" width="126" height="319" viewBox="0 0 126 319"><g stroke="#969696" stroke-width=".9" stroke-dasharray="1.500 1" fill="none"><path d="M10.400 11v300M24.500 12.500v282.500"/><path d="M14 6.800h3"/><path d="M26 18.9h5.500" stroke="#a8a8a8" stroke-dasharray="2 1"/><path d="M26 30.9h5.500" stroke="#a8a8a8" stroke-dasharray="2 1"/><path d="M26 42.9h5.500" stroke="#a8a8a8" stroke-dasharray="2 1"/><path d="M26 54.9h5.500" stroke="#a8a8a8" stroke-dasharray="2 1"/><path d="M26 66.9h5.500" stroke="#a8a8a8" stroke-dasharray="2 1"/><path d="M26 78.9h5.500" stroke="#a8a8a8" stroke-dasharray="2 1"/><path d="M26 90.9h5.500" stroke="#a8a8a8" stroke-dasharray="2 1"/><path d="M26 102.9h5.500" stroke="#a8a8a8" stroke-dasharray="2 1"/><path d="M26 114.9h5.500" stroke="#a8a8a8" stroke-dasharray="2 1"/><path d="M26 126.9h5.500" stroke="#a8a8a8" stroke-dasharray="2 1"/><path d="M26 138.9h5.500" stroke="#a8a8a8" stroke-dasharray="2 1"/><path d="M26 150.9h5.500" stroke="#a8a8a8" stroke-dasharray="2 1"/><path d="M26 162.9h5.500" stroke="#a8a8a8" stroke-dasharray="2 1"/><path d="M26 174.9h5.500" stroke="#a8a8a8" stroke-dasharray="2 1"/><path d="M26 186.9h5.500" stroke="#a8a8a8" stroke-dasharray="2 1"/><path d="M26 198.9h5.500" stroke="#a8a8a8" stroke-dasharray="2 1"/><path d="M26 210.9h5.500" stroke="#a8a8a8" stroke-dasharray="2 1"/><path d="M26 222.9h5.500" stroke="#a8a8a8" stroke-dasharray="2 1"/><path d="M26 234.9h5.500" stroke="#a8a8a8" stroke-dasharray="2 1"/><path d="M26 246.9h5.500" stroke="#a8a8a8" stroke-dasharray="2 1"/><path d="M26 258.9h5.500" stroke="#a8a8a8" stroke-dasharray="2 1"/><path d="M26 270.9h5.500" stroke="#a8a8a8" stroke-dasharray="2 1"/><path d="M26 282.9h5.500" stroke="#a8a8a8" stroke-dasharray="2 1"/><path d="M26 294.9h5.500" stroke="#a8a8a8" stroke-dasharray="2 1"/><path d="M14 307.300h3"/></g><rect x="7.300" y="3.400" width="6.300" height="7" fill="#fafafa" stroke="#ababab" stroke-width=".8" rx="1"/><path d="M8.800 7h3.400" stroke="#6f86c8" stroke-width=".9"/><rect x="7.300" y="303.700" width="6.300" height="7" fill="#fafafa" stroke="#ababab" stroke-width=".8" rx="1"/><path d="M8.800 307.300h3.400M10.500 305.500v3.600" stroke="#4a66b8" stroke-width=".9"/></svg>
<span class="t d" style="left:360.7px;top:154.8px;">图层</span>
<span class="t d" style="left:374.8px;top:166.9px;"><i>0</i>层</span>
<span class="t d" style="left:374.8px;top:178.9px;">中心线层</span>
<span class="t d" style="left:374.8px;top:190.9px;">剖面线层</span>
<span class="t d" style="left:374.8px;top:202.9px;">尺寸线层</span>
<span class="t d" style="left:374.8px;top:214.9px;">粗实线层</span>
<span class="t d" style="left:374.8px;top:226.9px;">细实线层</span>
<span class="t d" style="left:374.8px;top:238.9px;">虚线层</span>
<span class="t d" style="left:374.8px;top:250.9px;">隐藏层</span>
<span class="t d" style="left:374.8px;top:262.9px;"><i>QC_0</i>层</span>
<span class="t d" style="left:374.8px;top:274.9px;"><i>QC_0</i>层<i>_1</i></span>
<span class="t d" style="left:374.8px;top:286.9px;"><i>QC_</i>中心线层</span>
<span class="t d" style="left:374.8px;top:298.9px;"><i>QC_</i>中心线层<i>_1</i></span>
<span class="t d" style="left:374.8px;top:310.9px;"><i>QC_</i>剖面线层</span>
<span class="t d" style="left:374.8px;top:322.9px;"><i>QC_</i>剖面线层<i>_1</i></span>
<span class="t d" style="left:374.8px;top:334.9px;"><i>QC_</i>尺寸线层</span>
<span class="t d" style="left:374.8px;top:346.9px;"><i>QC_</i>尺寸线层<i>_1</i></span>
<div class="" style="left:373.5px;top:358.4px;width:55px;height:12.5px;background:#0a78d7"></div>
<span class="t d" style="left:374.8px;top:358.9px;color:#fff"><i>QC_</i>粗实线层</span>
<span class="t d" style="left:374.8px;top:370.9px;"><i>QC_</i>粗实线层<i>_1</i></span>
<span class="t d" style="left:374.8px;top:382.9px;"><i>QC_</i>细实线层</span>
<span class="t d" style="left:374.8px;top:394.9px;"><i>QC_</i>细实线层<i>_1</i></span>
<span class="t d" style="left:374.8px;top:406.9px;"><i>QC_</i>虚线层</span>
<span class="t d" style="left:374.8px;top:418.9px;"><i>QC_</i>虚线层<i>_1</i></span>
<span class="t d" style="left:374.8px;top:430.9px;"><i>QC_</i>隐藏层</span>
<span class="t d" style="left:374.8px;top:442.9px;"><i>QC_</i>隐藏层<i>_1</i></span>
<span class="t d" style="left:360.7px;top:455.3px;">线型</span>
<div style="left:342px;top:466px;width:126px;height:7.500px;overflow:hidden"><span class="t d" style="left:18.500px;top:1px">文本风格</span><svg style="left:7px;top:4.500px" width="8" height="8" viewBox="0 0 8 8"><rect x=".4" y=".4" width="7" height="7" fill="#fff" stroke="#9a9a9a" stroke-width=".8" rx="1"/></svg></div>
<div class="btn " style="left:507.5px;top:127.3px;width:53px;height:13.4px;line-height:12.8px">新建<i>(</i><u><i>N</i></u><i>)</i></div>
<div class="btn " style="left:593.3px;top:127.3px;width:53px;height:13.4px;line-height:12.8px">删除<i>(</i><u><i>D</i></u><i>)</i></div>
<div class="btn " style="left:684.8px;top:127.3px;width:53.5px;height:13.4px;line-height:12.8px">导入<i>(</i><u><i>M</i></u><i>)</i></div>
<div class="btn " style="left:771.2px;top:127.3px;width:53px;height:13.4px;line-height:12.8px">导出<i>(</i><u><i>E</i></u><i>)</i></div>
<div class="btn " style="left:507.5px;top:146.3px;width:53px;height:13px;line-height:13.4px">设为当前<i>(</i><u><i>C</i></u><i>)</i></div>
<div class="btn dis" style="left:593.3px;top:146.3px;width:53px;height:13px;line-height:13.4px">过滤<i>(</i><u><i>F</i></u><i>)</i></div>
<div class="btn " style="left:684.8px;top:146.3px;width:53.5px;height:13px;line-height:13.4px">合并<i>(</i><u><i>T</i></u><i>)</i></div>
<div class="btn dis" style="left:771.2px;top:146.3px;width:53px;height:13px;line-height:13.4px">样式替代<i>(</i><u><i>V</i></u><i>)</i></div>
<div class="btn def" style="left:653.6px;top:495.6px;width:55px;height:16px;line-height:15.0px">确定</div>
<div class="btn " style="left:711.6px;top:495.6px;width:54px;height:16px;line-height:15.0px">取消</div>
<div class="btn dis" style="left:769px;top:495.6px;width:53px;height:16px;line-height:15.0px">应用<i>(</i><u><i>A</i></u><i>)</i></div>
<div class="" style="left:502px;top:164.8px;width:341px;height:233.5px;background:#fff;border-left:2px solid #6d6d6d;border-top:1.600px solid #6d6d6d;border-bottom:1px solid #a0a0a0;border-right:1px solid #e3e3e3"></div>
<div class="" style="left:504px;top:384px;width:338px;height:13px;background:#f0f0f0"></div>
<div class="" style="left:518px;top:389.6px;width:236px;height:1.6px;background:#8a8a8a;border-radius:1px"></div>
<svg style="left:507px;top:387px" width="6" height="7" viewBox="0 0 6 7"><path d="M4.500 1l-3 2.500 3 2.500" stroke="#e4e4e4" fill="none"/></svg>
<svg style="left:833px;top:387px" width="6" height="7" viewBox="0 0 6 7"><path d="M1.500 1l3 2.500-3 2.500" stroke="#dcdcdc" fill="none"/></svg>
<div class="" style="left:502px;top:398.3px;width:341.6px;height:73.5px;background:#f0f0f0;border-left:2px solid #6d6d6d;border-bottom:1px solid #fafafa;border-right:1px solid #fafafa"></div>
<div class="" style="left:536.5px;top:168px;width:1px;height:17.5px;background:#e5e5e5"></div>
<div class="" style="left:574.5px;top:168px;width:1px;height:17.5px;background:#e5e5e5"></div>
<div class="" style="left:606.1px;top:168px;width:1px;height:17.5px;background:#e5e5e5"></div>
<div class="" style="left:637.4px;top:168px;width:1px;height:17.5px;background:#e5e5e5"></div>
<div class="" style="left:669.4px;top:168px;width:1px;height:17.5px;background:#e5e5e5"></div>
<div class="" style="left:700.7px;top:168px;width:1px;height:17.5px;background:#e5e5e5"></div>
<div class="" style="left:770.6px;top:168px;width:1px;height:17.5px;background:#e5e5e5"></div>
<div class="" style="left:840px;top:168px;width:1px;height:17.5px;background:#e5e5e5"></div>
<span class="t d" style="left:509.9px;top:170.8px;">当前</span>
<span class="t d" style="left:540.9px;top:170.8px;">层名</span>
<span class="t d" style="left:579.2px;top:170.8px;">打开</span>
<span class="t d" style="left:610.8px;top:170.8px;">冻结</span>
<span class="t d" style="left:642.1px;top:170.8px;">锁定</span>
<span class="t d" style="left:673.6px;top:170.8px;">打印</span>
<span class="t d" style="left:705.4px;top:170.8px;">颜色<i>(RGB)</i></span>
<span class="t d" style="left:775px;top:170.8px;">线型</span>
<div style="left:504px;top:166.400px;width:338px;height:217.6px;overflow:hidden"><div style="left:32px;top:19.70px;width:38.500px;height:12px;overflow:hidden"><span class="t d" style="left:0;top:0"><i>0</i>层</span></div><svg style="left:82.200px;top:19.40px" width="8" height="12" viewBox="0 0 8 12"><path d="M4 0.600c2.200 0 3.600 1.600 3.600 3.500 0 1.500-1 2.300-1.300 3.300-.1.400-.2.700-.2 1.100h-4.200c0-.4-.1-.7-.2-1.100-.3-1-1.300-1.800-1.300-3.300 0-1.900 1.400-3.500 3.600-3.500z" fill="#fbeaa0" stroke="#858585" stroke-width=".8"/><ellipse cx="3.300" cy="3.400" rx="1.300" ry="1.700" fill="#fffbe2"/><path d="M2.200 9.300h3.600M2.500 10.400h3" stroke="#444" stroke-width=".9"/><path d="M3 11.300h2" stroke="#333" stroke-width=".8"/></svg><svg style="left:112.100px;top:19.40px" width="12" height="12" viewBox="0 0 12 12"><g stroke="#fde3b4" stroke-width=".8"><path d="M6 0v12M0 6h12M1.800 1.800l8.400 8.400M10.200 1.800l-8.400 8.400"/></g><circle cx="6" cy="6" r="4.100" fill="#ffdc9c"/><circle cx="6" cy="6" r="3.400" fill="#ffcf72"/></svg><svg style="left:144px;top:19.90px" width="11" height="12" viewBox="0 0 11 12"><path d="M5.500 5v-2c0-2.600 4.600-2.600 4.600 0v1.200" fill="none" stroke="#dfc98a" stroke-width="1.500"/><rect x=".8" y="4.800" width="6.800" height="6" fill="#f1e6c2" stroke="#d6bd74" stroke-width="1.200"/><rect x="3.300" y="6.800" width="1.800" height="2" fill="#b08a2c"/></svg><svg style="left:174.800px;top:19.80px" width="13" height="12" viewBox="0 0 13 12"><path d="M3 4.500v-2.500c0-1 .6-1.500 1.500-1.500h3.500c.9 0 1.500.5 1.500 1.500v2.500" fill="#fff" stroke="#4a5060" stroke-width="1"/><rect x=".6" y="3.800" width="11.300" height="4.700" rx="2.200" fill="#e8ebf0" stroke="#3e4454" stroke-width="1.100"/><path d="M2.600 7h7.300v2.500c0 1-.6 1.500-1.500 1.500h-4.300c-.9 0-1.500-.5-1.500-1.500z" fill="#fff" stroke="#4a5060" stroke-width="1"/><path d="M3.500 9h5.500" stroke="#9aa8c0" stroke-width=".9"/></svg><svg style="left:200px;top:22.10px" width="8" height="8" viewBox="0 0 8 8"><rect x=".5" y=".5" width="7" height="7" fill="#111" stroke="#111" stroke-width=".8"/><path d="M1 2.500v4.500h4.500z" fill="#fff"/></svg><span class="t d" style="left:209.500px;top:19.70px"><i>(</i>黑白色<i>)</i></span><svg style="left:267px;top:25.60px" width="24" height="1" viewBox="0 0 24 1"><path d="M0 .5h23.500" stroke="#fb2a2a" stroke-width="1" /></svg><span class="t d" style="left:296.900px;top:19.70px">实线</span><div style="left:32px;top:32.47px;width:38.500px;height:12px;overflow:hidden"><span class="t d" style="left:0;top:0">中心线层</span></div><svg style="left:82.200px;top:32.17px" width="8" height="12" viewBox="0 0 8 12"><path d="M4 0.600c2.200 0 3.600 1.600 3.600 3.500 0 1.500-1 2.300-1.300 3.300-.1.400-.2.700-.2 1.100h-4.200c0-.4-.1-.7-.2-1.100-.3-1-1.300-1.800-1.300-3.300 0-1.900 1.400-3.500 3.600-3.500z" fill="#fbeaa0" stroke="#858585" stroke-width=".8"/><ellipse cx="3.300" cy="3.400" rx="1.300" ry="1.700" fill="#fffbe2"/><path d="M2.200 9.300h3.600M2.500 10.400h3" stroke="#444" stroke-width=".9"/><path d="M3 11.300h2" stroke="#333" stroke-width=".8"/></svg><svg style="left:112.100px;top:32.17px" width="12" height="12" viewBox="0 0 12 12"><g stroke="#fde3b4" stroke-width=".8"><path d="M6 0v12M0 6h12M1.800 1.800l8.400 8.400M10.200 1.800l-8.400 8.400"/></g><circle cx="6" cy="6" r="4.100" fill="#ffdc9c"/><circle cx="6" cy="6" r="3.400" fill="#ffcf72"/></svg><svg style="left:144px;top:32.67px" width="11" height="12" viewBox="0 0 11 12"><path d="M5.500 5v-2c0-2.600 4.600-2.600 4.600 0v1.200" fill="none" stroke="#dfc98a" stroke-width="1.500"/><rect x=".8" y="4.800" width="6.800" height="6" fill="#f1e6c2" stroke="#d6bd74" stroke-width="1.200"/><rect x="3.300" y="6.800" width="1.800" height="2" fill="#b08a2c"/></svg><svg style="left:174.800px;top:32.57px" width="13" height="12" viewBox="0 0 13 12"><path d="M3 4.500v-2.500c0-1 .6-1.500 1.500-1.500h3.500c.9 0 1.500.5 1.500 1.500v2.500" fill="#fff" stroke="#4a5060" stroke-width="1"/><rect x=".6" y="3.800" width="11.300" height="4.700" rx="2.200" fill="#e8ebf0" stroke="#3e4454" stroke-width="1.100"/><path d="M2.600 7h7.300v2.500c0 1-.6 1.500-1.500 1.500h-4.300c-.9 0-1.500-.5-1.500-1.500z" fill="#fff" stroke="#4a5060" stroke-width="1"/><path d="M3.500 9h5.500" stroke="#9aa8c0" stroke-width=".9"/></svg><svg style="left:200px;top:34.87px" width="8" height="8" viewBox="0 0 8 8"><rect x=".5" y=".5" width="7" height="7" fill="#e8111a" stroke="#5a96e6" stroke-width=".9"/></svg><span class="t d" style="left:209.500px;top:32.47px">红色</span><svg style="left:267px;top:38.60px" width="24" height="1" viewBox="0 0 24 1"><path d="M0 .5h23.500" stroke="#fb2a2a" stroke-width="1" stroke-dasharray="8.500 2 2 2"/></svg><span class="t d" style="left:296.900px;top:32.47px">点画线</span><div style="left:32px;top:45.24px;width:38.500px;height:12px;overflow:hidden"><span class="t d" style="left:0;top:0">剖面线层</span></div><svg style="left:82.200px;top:44.94px" width="8" height="12" viewBox="0 0 8 12"><path d="M4 0.600c2.200 0 3.600 1.600 3.600 3.500 0 1.500-1 2.300-1.300 3.300-.1.400-.2.700-.2 1.100h-4.200c0-.4-.1-.7-.2-1.100-.3-1-1.300-1.800-1.300-3.300 0-1.900 1.400-3.500 3.600-3.500z" fill="#fbeaa0" stroke="#858585" stroke-width=".8"/><ellipse cx="3.300" cy="3.400" rx="1.300" ry="1.700" fill="#fffbe2"/><path d="M2.200 9.300h3.600M2.500 10.400h3" stroke="#444" stroke-width=".9"/><path d="M3 11.300h2" stroke="#333" stroke-width=".8"/></svg><svg style="left:112.100px;top:44.94px" width="12" height="12" viewBox="0 0 12 12"><g stroke="#fde3b4" stroke-width=".8"><path d="M6 0v12M0 6h12M1.800 1.800l8.400 8.400M10.200 1.800l-8.400 8.400"/></g><circle cx="6" cy="6" r="4.100" fill="#ffdc9c"/><circle cx="6" cy="6" r="3.400" fill="#ffcf72"/></svg><svg style="left:144px;top:45.44px" width="11" height="12" viewBox="0 0 11 12"><path d="M5.500 5v-2c0-2.600 4.600-2.600 4.600 0v1.200" fill="none" stroke="#dfc98a" stroke-width="1.500"/><rect x=".8" y="4.800" width="6.800" height="6" fill="#f1e6c2" stroke="#d6bd74" stroke-width="1.200"/><rect x="3.300" y="6.800" width="1.800" height="2" fill="#b08a2c"/></svg><svg style="left:174.800px;top:45.34px" width="13" height="12" viewBox="0 0 13 12"><path d="M3 4.500v-2.500c0-1 .6-1.500 1.500-1.500h3.500c.9 0 1.500.5 1.500 1.500v2.500" fill="#fff" stroke="#4a5060" stroke-width="1"/><rect x=".6" y="3.800" width="11.300" height="4.700" rx="2.200" fill="#e8ebf0" stroke="#3e4454" stroke-width="1.100"/><path d="M2.600 7h7.300v2.500c0 1-.6 1.500-1.500 1.500h-4.300c-.9 0-1.500-.5-1.500-1.500z" fill="#fff" stroke="#4a5060" stroke-width="1"/><path d="M3.500 9h5.500" stroke="#9aa8c0" stroke-width=".9"/></svg><svg style="left:200px;top:47.64px" width="8" height="8" viewBox="0 0 8 8"><rect x=".5" y=".5" width="7" height="7" fill="#18e8f8" stroke="#5a96e6" stroke-width=".9"/></svg><span class="t d" style="left:209.500px;top:45.24px">青色</span><svg style="left:267px;top:50.60px" width="24" height="1" viewBox="0 0 24 1"><path d="M0 .5h23.500" stroke="#fb2a2a" stroke-width="1" /></svg><span class="t d" style="left:296.900px;top:45.24px">实线</span><div style="left:32px;top:58.01px;width:38.500px;height:12px;overflow:hidden"><span class="t d" style="left:0;top:0">尺寸线层</span></div><svg style="left:82.200px;top:57.71px" width="8" height="12" viewBox="0 0 8 12"><path d="M4 0.600c2.200 0 3.600 1.600 3.600 3.500 0 1.500-1 2.300-1.300 3.300-.1.400-.2.700-.2 1.100h-4.200c0-.4-.1-.7-.2-1.100-.3-1-1.300-1.800-1.300-3.300 0-1.900 1.400-3.500 3.600-3.500z" fill="#fbeaa0" stroke="#858585" stroke-width=".8"/><ellipse cx="3.300" cy="3.400" rx="1.300" ry="1.700" fill="#fffbe2"/><path d="M2.200 9.300h3.600M2.500 10.400h3" stroke="#444" stroke-width=".9"/><path d="M3 11.300h2" stroke="#333" stroke-width=".8"/></svg><svg style="left:112.100px;top:57.71px" width="12" height="12" viewBox="0 0 12 12"><g stroke="#fde3b4" stroke-width=".8"><path d="M6 0v12M0 6h12M1.800 1.800l8.400 8.400M10.200 1.800l-8.400 8.400"/></g><circle cx="6" cy="6" r="4.100" fill="#ffdc9c"/><circle cx="6" cy="6" r="3.400" fill="#ffcf72"/></svg><svg style="left:144px;top:58.21px" width="11" height="12" viewBox="0 0 11 12"><path d="M5.500 5v-2c0-2.600 4.600-2.600 4.600 0v1.200" fill="none" stroke="#dfc98a" stroke-width="1.500"/><rect x=".8" y="4.800" width="6.800" height="6" fill="#f1e6c2" stroke="#d6bd74" stroke-width="1.200"/><rect x="3.300" y="6.800" width="1.800" height="2" fill="#b08a2c"/></svg><svg style="left:174.800px;top:58.11px" width="13" height="12" viewBox="0 0 13 12"><path d="M3 4.500v-2.500c0-1 .6-1.500 1.500-1.500h3.500c.9 0 1.500.5 1.500 1.500v2.500" fill="#fff" stroke="#4a5060" stroke-width="1"/><rect x=".6" y="3.800" width="11.300" height="4.700" rx="2.200" fill="#e8ebf0" stroke="#3e4454" stroke-width="1.100"/><path d="M2.600 7h7.300v2.500c0 1-.6 1.500-1.500 1.500h-4.300c-.9 0-1.500-.5-1.500-1.500z" fill="#fff" stroke="#4a5060" stroke-width="1"/><path d="M3.500 9h5.500" stroke="#9aa8c0" stroke-width=".9"/></svg><svg style="left:200px;top:60.41px" width="8" height="8" viewBox="0 0 8 8"><rect x=".5" y=".5" width="7" height="7" fill="#16e016" stroke="#5a96e6" stroke-width=".9"/></svg><span class="t d" style="left:209.500px;top:58.01px">绿色</span><svg style="left:267px;top:63.60px" width="24" height="1" viewBox="0 0 24 1"><path d="M0 .5h23.500" stroke="#fb2a2a" stroke-width="1" /></svg><span class="t d" style="left:296.900px;top:58.01px">实线</span><div style="left:32px;top:70.78px;width:38.500px;height:12px;overflow:hidden"><span class="t d" style="left:0;top:0">粗实线层</span></div><svg style="left:82.200px;top:70.48px" width="8" height="12" viewBox="0 0 8 12"><path d="M4 0.600c2.200 0 3.600 1.600 3.600 3.500 0 1.500-1 2.300-1.300 3.300-.1.400-.2.700-.2 1.100h-4.200c0-.4-.1-.7-.2-1.100-.3-1-1.300-1.800-1.300-3.300 0-1.900 1.400-3.500 3.600-3.500z" fill="#fbeaa0" stroke="#858585" stroke-width=".8"/><ellipse cx="3.300" cy="3.400" rx="1.300" ry="1.700" fill="#fffbe2"/><path d="M2.200 9.300h3.600M2.500 10.400h3" stroke="#444" stroke-width=".9"/><path d="M3 11.300h2" stroke="#333" stroke-width=".8"/></svg><svg style="left:112.100px;top:70.48px" width="12" height="12" viewBox="0 0 12 12"><g stroke="#fde3b4" stroke-width=".8"><path d="M6 0v12M0 6h12M1.800 1.800l8.400 8.400M10.200 1.800l-8.400 8.400"/></g><circle cx="6" cy="6" r="4.100" fill="#ffdc9c"/><circle cx="6" cy="6" r="3.400" fill="#ffcf72"/></svg><svg style="left:144px;top:70.98px" width="11" height="12" viewBox="0 0 11 12"><path d="M5.500 5v-2c0-2.600 4.600-2.600 4.600 0v1.200" fill="none" stroke="#dfc98a" stroke-width="1.500"/><rect x=".8" y="4.800" width="6.800" height="6" fill="#f1e6c2" stroke="#d6bd74" stroke-width="1.200"/><rect x="3.300" y="6.800" width="1.800" height="2" fill="#b08a2c"/></svg><svg style="left:174.800px;top:70.88px" width="13" height="12" viewBox="0 0 13 12"><path d="M3 4.500v-2.500c0-1 .6-1.500 1.500-1.500h3.500c.9 0 1.500.5 1.500 1.500v2.500" fill="#fff" stroke="#4a5060" stroke-width="1"/><rect x=".6" y="3.800" width="11.300" height="4.700" rx="2.200" fill="#e8ebf0" stroke="#3e4454" stroke-width="1.100"/><path d="M2.600 7h7.300v2.500c0 1-.6 1.500-1.500 1.500h-4.300c-.9 0-1.500-.5-1.500-1.500z" fill="#fff" stroke="#4a5060" stroke-width="1"/><path d="M3.500 9h5.500" stroke="#9aa8c0" stroke-width=".9"/></svg><svg style="left:200px;top:73.18px" width="8" height="8" viewBox="0 0 8 8"><rect x=".5" y=".5" width="7" height="7" fill="#111" stroke="#111" stroke-width=".8"/><path d="M1 2.500v4.500h4.500z" fill="#fff"/></svg><span class="t d" style="left:209.500px;top:70.78px"><i>(</i>黑白色<i>)</i></span><svg style="left:267px;top:76.60px" width="24" height="1" viewBox="0 0 24 1"><path d="M0 .5h23.500" stroke="#fb2a2a" stroke-width="1" /></svg><span class="t d" style="left:296.900px;top:70.78px">实线</span><div style="left:32px;top:83.55px;width:38.500px;height:12px;overflow:hidden"><span class="t d" style="left:0;top:0">细实线层</span></div><svg style="left:82.200px;top:83.25px" width="8" height="12" viewBox="0 0 8 12"><path d="M4 0.600c2.200 0 3.600 1.600 3.600 3.500 0 1.500-1 2.300-1.300 3.300-.1.400-.2.700-.2 1.100h-4.200c0-.4-.1-.7-.2-1.100-.3-1-1.300-1.800-1.300-3.300 0-1.900 1.400-3.500 3.600-3.500z" fill="#fbeaa0" stroke="#858585" stroke-width=".8"/><ellipse cx="3.300" cy="3.400" rx="1.300" ry="1.700" fill="#fffbe2"/><path d="M2.200 9.300h3.600M2.500 10.400h3" stroke="#444" stroke-width=".9"/><path d="M3 11.300h2" stroke="#333" stroke-width=".8"/></svg><svg style="left:112.100px;top:83.25px" width="12" height="12" viewBox="0 0 12 12"><g stroke="#fde3b4" stroke-width=".8"><path d="M6 0v12M0 6h12M1.800 1.800l8.400 8.400M10.200 1.800l-8.400 8.400"/></g><circle cx="6" cy="6" r="4.100" fill="#ffdc9c"/><circle cx="6" cy="6" r="3.400" fill="#ffcf72"/></svg><svg style="left:144px;top:83.75px" width="11" height="12" viewBox="0 0 11 12"><path d="M5.500 5v-2c0-2.600 4.600-2.600 4.600 0v1.200" fill="none" stroke="#dfc98a" stroke-width="1.500"/><rect x=".8" y="4.800" width="6.800" height="6" fill="#f1e6c2" stroke="#d6bd74" stroke-width="1.200"/><rect x="3.300" y="6.800" width="1.800" height="2" fill="#b08a2c"/></svg><svg style="left:174.800px;top:83.65px" width="13" height="12" viewBox="0 0 13 12"><path d="M3 4.500v-2.500c0-1 .6-1.500 1.500-1.500h3.500c.9 0 1.500.5 1.500 1.500v2.500" fill="#fff" stroke="#4a5060" stroke-width="1"/><rect x=".6" y="3.800" width="11.300" height="4.700" rx="2.200" fill="#e8ebf0" stroke="#3e4454" stroke-width="1.100"/><path d="M2.600 7h7.300v2.500c0 1-.6 1.500-1.500 1.500h-4.300c-.9 0-1.500-.5-1.500-1.500z" fill="#fff" stroke="#4a5060" stroke-width="1"/><path d="M3.500 9h5.500" stroke="#9aa8c0" stroke-width=".9"/></svg><svg style="left:200px;top:85.95px" width="8" height="8" viewBox="0 0 8 8"><rect x=".5" y=".5" width="7" height="7" fill="#111" stroke="#111" stroke-width=".8"/><path d="M1 2.500v4.500h4.500z" fill="#fff"/></svg><span class="t d" style="left:209.500px;top:83.55px"><i>(</i>黑白色<i>)</i></span><svg style="left:267px;top:89.60px" width="24" height="1" viewBox="0 0 24 1"><path d="M0 .5h23.500" stroke="#fb2a2a" stroke-width="1" /></svg><span class="t d" style="left:296.900px;top:83.55px">实线</span><div style="left:32px;top:96.32px;width:38.500px;height:12px;overflow:hidden"><span class="t d" style="left:0;top:0">虚线层</span></div><svg style="left:82.200px;top:96.02px" width="8" height="12" viewBox="0 0 8 12"><path d="M4 0.600c2.200 0 3.600 1.600 3.600 3.500 0 1.500-1 2.300-1.300 3.300-.1.400-.2.700-.2 1.100h-4.200c0-.4-.1-.7-.2-1.100-.3-1-1.300-1.800-1.300-3.300 0-1.900 1.400-3.500 3.600-3.500z" fill="#fbeaa0" stroke="#858585" stroke-width=".8"/><ellipse cx="3.300" cy="3.400" rx="1.300" ry="1.700" fill="#fffbe2"/><path d="M2.200 9.300h3.600M2.500 10.400h3" stroke="#444" stroke-width=".9"/><path d="M3 11.300h2" stroke="#333" stroke-width=".8"/></svg><svg style="left:112.100px;top:96.02px" width="12" height="12" viewBox="0 0 12 12"><g stroke="#fde3b4" stroke-width=".8"><path d="M6 0v12M0 6h12M1.800 1.800l8.400 8.400M10.200 1.800l-8.400 8.400"/></g><circle cx="6" cy="6" r="4.100" fill="#ffdc9c"/><circle cx="6" cy="6" r="3.400" fill="#ffcf72"/></svg><svg style="left:144px;top:96.52px" width="11" height="12" viewBox="0 0 11 12"><path d="M5.500 5v-2c0-2.600 4.600-2.600 4.600 0v1.200" fill="none" stroke="#dfc98a" stroke-width="1.500"/><rect x=".8" y="4.800" width="6.800" height="6" fill="#f1e6c2" stroke="#d6bd74" stroke-width="1.200"/><rect x="3.300" y="6.800" width="1.800" height="2" fill="#b08a2c"/></svg><svg style="left:174.800px;top:96.42px" width="13" height="12" viewBox="0 0 13 12"><path d="M3 4.500v-2.500c0-1 .6-1.500 1.500-1.500h3.500c.9 0 1.500.5 1.500 1.500v2.500" fill="#fff" stroke="#4a5060" stroke-width="1"/><rect x=".6" y="3.800" width="11.300" height="4.700" rx="2.200" fill="#e8ebf0" stroke="#3e4454" stroke-width="1.100"/><path d="M2.600 7h7.300v2.500c0 1-.6 1.500-1.500 1.500h-4.300c-.9 0-1.500-.5-1.500-1.500z" fill="#fff" stroke="#4a5060" stroke-width="1"/><path d="M3.500 9h5.500" stroke="#9aa8c0" stroke-width=".9"/></svg><svg style="left:200px;top:98.72px" width="8" height="8" viewBox="0 0 8 8"><rect x=".5" y=".5" width="7" height="7" fill="#e818f0" stroke="#5a96e6" stroke-width=".9"/></svg><span class="t d" style="left:209.500px;top:96.32px">洋红</span><svg style="left:267px;top:101.60px" width="24" height="1" viewBox="0 0 24 1"><path d="M0 .5h23.500" stroke="#fb2a2a" stroke-width="1" stroke-dasharray="6 6.500"/></svg><span class="t d" style="left:296.900px;top:96.32px">虚线</span><div style="left:32px;top:109.09px;width:38.500px;height:12px;overflow:hidden"><span class="t d" style="left:0;top:0">隐藏层</span></div><svg style="left:82.200px;top:108.79px" width="8" height="12" viewBox="0 0 8 12"><path d="M4 0.600c2.200 0 3.600 1.600 3.600 3.500 0 1.500-1 2.300-1.300 3.300-.1.400-.2.700-.2 1.100h-4.200c0-.4-.1-.7-.2-1.100-.3-1-1.300-1.800-1.300-3.300 0-1.900 1.400-3.500 3.600-3.500z" fill="#d4d4d4" stroke="#858585" stroke-width=".8"/><ellipse cx="3.300" cy="3.400" rx="1.300" ry="1.700" fill="#f2f2f2"/><path d="M2.200 9.300h3.600M2.500 10.400h3" stroke="#444" stroke-width=".9"/><path d="M3 11.300h2" stroke="#333" stroke-width=".8"/></svg><svg style="left:112.100px;top:108.79px" width="12" height="12" viewBox="0 0 12 12"><g stroke="#fde3b4" stroke-width=".8"><path d="M6 0v12M0 6h12M1.800 1.800l8.400 8.400M10.200 1.800l-8.400 8.400"/></g><circle cx="6" cy="6" r="4.100" fill="#ffdc9c"/><circle cx="6" cy="6" r="3.400" fill="#ffcf72"/></svg><svg style="left:144px;top:109.29px" width="11" height="12" viewBox="0 0 11 12"><path d="M5.500 5v-2c0-2.600 4.600-2.600 4.600 0v1.200" fill="none" stroke="#dfc98a" stroke-width="1.500"/><rect x=".8" y="4.800" width="6.800" height="6" fill="#f1e6c2" stroke="#d6bd74" stroke-width="1.200"/><rect x="3.300" y="6.800" width="1.800" height="2" fill="#b08a2c"/></svg><svg style="left:174.800px;top:109.19px" width="13" height="12" viewBox="0 0 13 12"><path d="M3 4.500v-2.500c0-1 .6-1.500 1.500-1.500h3.500c.9 0 1.500.5 1.500 1.500v2.500" fill="#fff" stroke="#4a5060" stroke-width="1"/><rect x=".6" y="3.800" width="11.300" height="4.700" rx="2.200" fill="#e8ebf0" stroke="#3e4454" stroke-width="1.100"/><path d="M2.600 7h7.300v2.500c0 1-.6 1.500-1.500 1.500h-4.300c-.9 0-1.500-.5-1.500-1.500z" fill="#fff" stroke="#4a5060" stroke-width="1"/><path d="M3.500 9h5.500" stroke="#9aa8c0" stroke-width=".9"/></svg><svg style="left:200px;top:111.49px" width="8" height="8" viewBox="0 0 8 8"><rect x=".5" y=".5" width="7" height="7" fill="#111" stroke="#111" stroke-width=".8"/><path d="M1 2.500v4.500h4.500z" fill="#fff"/></svg><span class="t d" style="left:209.500px;top:109.09px"><i>(</i>黑白色<i>)</i></span><svg style="left:267px;top:114.60px" width="24" height="1" viewBox="0 0 24 1"><path d="M0 .5h23.500" stroke="#fb2a2a" stroke-width="1" /></svg><span class="t d" style="left:296.900px;top:109.09px">实线</span><div style="left:32px;top:121.86px;width:38.500px;height:12px;overflow:hidden"><span class="t d" style="left:0;top:0"><i>QC_0</i>层</span></div><svg style="left:82.200px;top:121.56px" width="8" height="12" viewBox="0 0 8 12"><path d="M4 0.600c2.200 0 3.600 1.600 3.600 3.500 0 1.500-1 2.300-1.300 3.300-.1.400-.2.700-.2 1.100h-4.200c0-.4-.1-.7-.2-1.100-.3-1-1.300-1.800-1.300-3.300 0-1.900 1.400-3.500 3.600-3.500z" fill="#fbeaa0" stroke="#858585" stroke-width=".8"/><ellipse cx="3.300" cy="3.400" rx="1.300" ry="1.700" fill="#fffbe2"/><path d="M2.200 9.300h3.600M2.500 10.400h3" stroke="#444" stroke-width=".9"/><path d="M3 11.300h2" stroke="#333" stroke-width=".8"/></svg><svg style="left:112.100px;top:121.56px" width="12" height="12" viewBox="0 0 12 12"><g stroke="#fde3b4" stroke-width=".8"><path d="M6 0v12M0 6h12M1.800 1.800l8.400 8.400M10.200 1.800l-8.400 8.400"/></g><circle cx="6" cy="6" r="4.100" fill="#ffdc9c"/><circle cx="6" cy="6" r="3.400" fill="#ffcf72"/></svg><svg style="left:144px;top:122.06px" width="11" height="12" viewBox="0 0 11 12"><path d="M5.500 5v-2c0-2.600 4.600-2.600 4.600 0v1.200" fill="none" stroke="#dfc98a" stroke-width="1.500"/><rect x=".8" y="4.800" width="6.800" height="6" fill="#f1e6c2" stroke="#d6bd74" stroke-width="1.200"/><rect x="3.300" y="6.800" width="1.800" height="2" fill="#b08a2c"/></svg><svg style="left:174.800px;top:121.96px" width="13" height="12" viewBox="0 0 13 12"><path d="M3 4.500v-2.500c0-1 .6-1.500 1.500-1.500h3.500c.9 0 1.500.5 1.500 1.500v2.500" fill="#fff" stroke="#4a5060" stroke-width="1"/><rect x=".6" y="3.800" width="11.300" height="4.700" rx="2.200" fill="#e8ebf0" stroke="#3e4454" stroke-width="1.100"/><path d="M2.600 7h7.300v2.500c0 1-.6 1.500-1.500 1.500h-4.300c-.9 0-1.500-.5-1.500-1.500z" fill="#fff" stroke="#4a5060" stroke-width="1"/><path d="M3.500 9h5.500" stroke="#9aa8c0" stroke-width=".9"/></svg><svg style="left:200px;top:124.26px" width="8" height="8" viewBox="0 0 8 8"><rect x=".5" y=".5" width="7" height="7" fill="#111" stroke="#111" stroke-width=".8"/><path d="M1 2.500v4.500h4.500z" fill="#fff"/></svg><span class="t d" style="left:209.500px;top:121.86px"><i>(</i>黑白色<i>)</i></span><svg style="left:267px;top:127.60px" width="24" height="1" viewBox="0 0 24 1"><path d="M0 .5h23.500" stroke="#fb2a2a" stroke-width="1" /></svg><span class="t d" style="left:296.900px;top:121.86px">实线</span><div style="left:32px;top:134.63px;width:38.500px;height:12px;overflow:hidden"><span class="t d" style="left:0;top:0"><i>QC_0</i>层<i>_1</i></span></div><svg style="left:82.200px;top:134.33px" width="8" height="12" viewBox="0 0 8 12"><path d="M4 0.600c2.200 0 3.600 1.600 3.600 3.500 0 1.500-1 2.300-1.300 3.300-.1.400-.2.700-.2 1.100h-4.200c0-.4-.1-.7-.2-1.100-.3-1-1.300-1.800-1.300-3.300 0-1.900 1.400-3.500 3.600-3.500z" fill="#fbeaa0" stroke="#858585" stroke-width=".8"/><ellipse cx="3.300" cy="3.400" rx="1.300" ry="1.700" fill="#fffbe2"/><path d="M2.200 9.300h3.600M2.500 10.400h3" stroke="#444" stroke-width=".9"/><path d="M3 11.300h2" stroke="#333" stroke-width=".8"/></svg><svg style="left:112.100px;top:134.33px" width="12" height="12" viewBox="0 0 12 12"><g stroke="#fde3b4" stroke-width=".8"><path d="M6 0v12M0 6h12M1.800 1.800l8.400 8.400M10.200 1.800l-8.400 8.400"/></g><circle cx="6" cy="6" r="4.100" fill="#ffdc9c"/><circle cx="6" cy="6" r="3.400" fill="#ffcf72"/></svg><svg style="left:144px;top:134.83px" width="11" height="12" viewBox="0 0 11 12"><path d="M5.500 5v-2c0-2.600 4.600-2.600 4.600 0v1.200" fill="none" stroke="#dfc98a" stroke-width="1.500"/><rect x=".8" y="4.800" width="6.800" height="6" fill="#f1e6c2" stroke="#d6bd74" stroke-width="1.200"/><rect x="3.300" y="6.800" width="1.800" height="2" fill="#b08a2c"/></svg><svg style="left:174.800px;top:134.73px" width="13" height="12" viewBox="0 0 13 12"><path d="M3 4.500v-2.500c0-1 .6-1.500 1.500-1.500h3.500c.9 0 1.500.5 1.500 1.500v2.500" fill="#fff" stroke="#4a5060" stroke-width="1"/><rect x=".6" y="3.800" width="11.300" height="4.700" rx="2.200" fill="#e8ebf0" stroke="#3e4454" stroke-width="1.100"/><path d="M2.600 7h7.300v2.500c0 1-.6 1.500-1.500 1.500h-4.300c-.9 0-1.500-.5-1.500-1.500z" fill="#fff" stroke="#4a5060" stroke-width="1"/><path d="M3.500 9h5.500" stroke="#9aa8c0" stroke-width=".9"/></svg><svg style="left:200px;top:137.03px" width="8" height="8" viewBox="0 0 8 8"><rect x=".5" y=".5" width="7" height="7" fill="#111" stroke="#111" stroke-width=".8"/><path d="M1 2.500v4.500h4.500z" fill="#fff"/></svg><span class="t d" style="left:209.500px;top:134.63px"><i>(</i>黑白色<i>)</i></span><svg style="left:267px;top:140.60px" width="24" height="1" viewBox="0 0 24 1"><path d="M0 .5h23.500" stroke="#fb2a2a" stroke-width="1" /></svg><span class="t d" style="left:296.900px;top:134.63px">实线</span><div style="left:32px;top:147.40px;width:38.500px;height:12px;overflow:hidden"><span class="t d" style="left:0;top:0"><i>QC_</i>中心线层</span></div><svg style="left:82.200px;top:147.10px" width="8" height="12" viewBox="0 0 8 12"><path d="M4 0.600c2.200 0 3.600 1.600 3.600 3.500 0 1.500-1 2.300-1.300 3.300-.1.400-.2.700-.2 1.100h-4.200c0-.4-.1-.7-.2-1.100-.3-1-1.300-1.800-1.300-3.300 0-1.900 1.400-3.500 3.600-3.500z" fill="#fbeaa0" stroke="#858585" stroke-width=".8"/><ellipse cx="3.300" cy="3.400" rx="1.300" ry="1.700" fill="#fffbe2"/><path d="M2.200 9.300h3.600M2.500 10.400h3" stroke="#444" stroke-width=".9"/><path d="M3 11.300h2" stroke="#333" stroke-width=".8"/></svg><svg style="left:112.100px;top:147.10px" width="12" height="12" viewBox="0 0 12 12"><g stroke="#fde3b4" stroke-width=".8"><path d="M6 0v12M0 6h12M1.800 1.800l8.400 8.400M10.200 1.800l-8.400 8.400"/></g><circle cx="6" cy="6" r="4.100" fill="#ffdc9c"/><circle cx="6" cy="6" r="3.400" fill="#ffcf72"/></svg><svg style="left:144px;top:147.60px" width="11" height="12" viewBox="0 0 11 12"><path d="M5.500 5v-2c0-2.600 4.600-2.600 4.600 0v1.200" fill="none" stroke="#dfc98a" stroke-width="1.500"/><rect x=".8" y="4.800" width="6.800" height="6" fill="#f1e6c2" stroke="#d6bd74" stroke-width="1.200"/><rect x="3.300" y="6.800" width="1.800" height="2" fill="#b08a2c"/></svg><svg style="left:174.800px;top:147.50px" width="13" height="12" viewBox="0 0 13 12"><path d="M3 4.500v-2.500c0-1 .6-1.500 1.500-1.500h3.500c.9 0 1.500.5 1.500 1.500v2.500" fill="#fff" stroke="#4a5060" stroke-width="1"/><rect x=".6" y="3.800" width="11.300" height="4.700" rx="2.200" fill="#e8ebf0" stroke="#3e4454" stroke-width="1.100"/><path d="M2.600 7h7.300v2.500c0 1-.6 1.500-1.500 1.500h-4.300c-.9 0-1.500-.5-1.500-1.500z" fill="#fff" stroke="#4a5060" stroke-width="1"/><path d="M3.500 9h5.500" stroke="#9aa8c0" stroke-width=".9"/></svg><svg style="left:200px;top:149.80px" width="8" height="8" viewBox="0 0 8 8"><rect x=".5" y=".5" width="7" height="7" fill="#e8111a" stroke="#5a96e6" stroke-width=".9"/></svg><span class="t d" style="left:209.500px;top:147.40px">红色</span><svg style="left:267px;top:153.60px" width="24" height="1" viewBox="0 0 24 1"><path d="M0 .5h23.500" stroke="#fb2a2a" stroke-width="1" stroke-dasharray="8.500 2 2 2"/></svg><span class="t d" style="left:296.900px;top:147.40px">点画线</span><div style="left:32px;top:160.17px;width:38.500px;height:12px;overflow:hidden"><span class="t d" style="left:0;top:0"><i>QC_</i>中心线层<i>_1</i></span></div><svg style="left:82.200px;top:159.87px" width="8" height="12" viewBox="0 0 8 12"><path d="M4 0.600c2.200 0 3.600 1.600 3.600 3.500 0 1.500-1 2.300-1.300 3.300-.1.400-.2.700-.2 1.100h-4.200c0-.4-.1-.7-.2-1.100-.3-1-1.300-1.800-1.300-3.300 0-1.900 1.400-3.500 3.600-3.500z" fill="#fbeaa0" stroke="#858585" stroke-width=".8"/><ellipse cx="3.300" cy="3.400" rx="1.300" ry="1.700" fill="#fffbe2"/><path d="M2.200 9.300h3.600M2.500 10.400h3" stroke="#444" stroke-width=".9"/><path d="M3 11.300h2" stroke="#333" stroke-width=".8"/></svg><svg style="left:112.100px;top:159.87px" width="12" height="12" viewBox="0 0 12 12"><g stroke="#fde3b4" stroke-width=".8"><path d="M6 0v12M0 6h12M1.800 1.800l8.400 8.400M10.200 1.800l-8.400 8.400"/></g><circle cx="6" cy="6" r="4.100" fill="#ffdc9c"/><circle cx="6" cy="6" r="3.400" fill="#ffcf72"/></svg><svg style="left:144px;top:160.37px" width="11" height="12" viewBox="0 0 11 12"><path d="M5.500 5v-2c0-2.600 4.600-2.600 4.600 0v1.200" fill="none" stroke="#dfc98a" stroke-width="1.500"/><rect x=".8" y="4.800" width="6.800" height="6" fill="#f1e6c2" stroke="#d6bd74" stroke-width="1.200"/><rect x="3.300" y="6.800" width="1.800" height="2" fill="#b08a2c"/></svg><svg style="left:174.800px;top:160.27px" width="13" height="12" viewBox="0 0 13 12"><path d="M3 4.500v-2.500c0-1 .6-1.500 1.500-1.500h3.500c.9 0 1.500.5 1.500 1.500v2.500" fill="#fff" stroke="#4a5060" stroke-width="1"/><rect x=".6" y="3.800" width="11.300" height="4.700" rx="2.200" fill="#e8ebf0" stroke="#3e4454" stroke-width="1.100"/><path d="M2.600 7h7.300v2.500c0 1-.6 1.500-1.500 1.500h-4.300c-.9 0-1.500-.5-1.500-1.500z" fill="#fff" stroke="#4a5060" stroke-width="1"/><path d="M3.500 9h5.500" stroke="#9aa8c0" stroke-width=".9"/></svg><svg style="left:200px;top:162.57px" width="8" height="8" viewBox="0 0 8 8"><rect x=".5" y=".5" width="7" height="7" fill="#e8111a" stroke="#5a96e6" stroke-width=".9"/></svg><span class="t d" style="left:209.500px;top:160.17px">红色</span><svg style="left:267px;top:165.60px" width="24" height="1" viewBox="0 0 24 1"><path d="M0 .5h23.500" stroke="#fb2a2a" stroke-width="1" stroke-dasharray="8.500 2 2 2"/></svg><span class="t d" style="left:296.900px;top:160.17px">点画线</span><div style="left:32px;top:172.94px;width:38.500px;height:12px;overflow:hidden"><span class="t d" style="left:0;top:0"><i>QC_</i>剖面线层</span></div><svg style="left:82.200px;top:172.64px" width="8" height="12" viewBox="0 0 8 12"><path d="M4 0.600c2.200 0 3.600 1.600 3.600 3.500 0 1.500-1 2.300-1.300 3.300-.1.400-.2.700-.2 1.100h-4.200c0-.4-.1-.7-.2-1.100-.3-1-1.300-1.800-1.300-3.300 0-1.900 1.400-3.500 3.600-3.500z" fill="#fbeaa0" stroke="#858585" stroke-width=".8"/><ellipse cx="3.300" cy="3.400" rx="1.300" ry="1.700" fill="#fffbe2"/><path d="M2.200 9.300h3.600M2.500 10.400h3" stroke="#444" stroke-width=".9"/><path d="M3 11.300h2" stroke="#333" stroke-width=".8"/></svg><svg style="left:112.100px;top:172.64px" width="12" height="12" viewBox="0 0 12 12"><g stroke="#fde3b4" stroke-width=".8"><path d="M6 0v12M0 6h12M1.800 1.800l8.400 8.400M10.200 1.800l-8.400 8.400"/></g><circle cx="6" cy="6" r="4.100" fill="#ffdc9c"/><circle cx="6" cy="6" r="3.400" fill="#ffcf72"/></svg><svg style="left:144px;top:173.14px" width="11" height="12" viewBox="0 0 11 12"><path d="M5.500 5v-2c0-2.600 4.600-2.600 4.600 0v1.200" fill="none" stroke="#dfc98a" stroke-width="1.500"/><rect x=".8" y="4.800" width="6.800" height="6" fill="#f1e6c2" stroke="#d6bd74" stroke-width="1.200"/><rect x="3.300" y="6.800" width="1.800" height="2" fill="#b08a2c"/></svg><svg style="left:174.800px;top:173.04px" width="13" height="12" viewBox="0 0 13 12"><path d="M3 4.500v-2.500c0-1 .6-1.500 1.500-1.500h3.500c.9 0 1.500.5 1.500 1.500v2.500" fill="#fff" stroke="#4a5060" stroke-width="1"/><rect x=".6" y="3.800" width="11.300" height="4.700" rx="2.200" fill="#e8ebf0" stroke="#3e4454" stroke-width="1.100"/><path d="M2.600 7h7.300v2.500c0 1-.6 1.500-1.500 1.500h-4.300c-.9 0-1.500-.5-1.500-1.500z" fill="#fff" stroke="#4a5060" stroke-width="1"/><path d="M3.500 9h5.500" stroke="#9aa8c0" stroke-width=".9"/></svg><svg style="left:200px;top:175.34px" width="8" height="8" viewBox="0 0 8 8"><rect x=".5" y=".5" width="7" height="7" fill="#18e8f8" stroke="#5a96e6" stroke-width=".9"/></svg><span class="t d" style="left:209.500px;top:172.94px">青色</span><svg style="left:267px;top:178.60px" width="24" height="1" viewBox="0 0 24 1"><path d="M0 .5h23.500" stroke="#fb2a2a" stroke-width="1" /></svg><span class="t d" style="left:296.900px;top:172.94px">实线</span><div style="left:32px;top:185.71px;width:38.500px;height:12px;overflow:hidden"><span class="t d" style="left:0;top:0"><i>QC_</i>剖面线层<i>_1</i></span></div><svg style="left:82.200px;top:185.41px" width="8" height="12" viewBox="0 0 8 12"><path d="M4 0.600c2.200 0 3.600 1.600 3.600 3.500 0 1.500-1 2.300-1.300 3.300-.1.400-.2.700-.2 1.100h-4.200c0-.4-.1-.7-.2-1.100-.3-1-1.300-1.800-1.300-3.300 0-1.900 1.400-3.500 3.600-3.500z" fill="#fbeaa0" stroke="#858585" stroke-width=".8"/><ellipse cx="3.300" cy="3.400" rx="1.300" ry="1.700" fill="#fffbe2"/><path d="M2.200 9.300h3.600M2.500 10.400h3" stroke="#444" stroke-width=".9"/><path d="M3 11.300h2" stroke="#333" stroke-width=".8"/></svg><svg style="left:112.100px;top:185.41px" width="12" height="12" viewBox="0 0 12 12"><g stroke="#fde3b4" stroke-width=".8"><path d="M6 0v12M0 6h12M1.800 1.800l8.400 8.400M10.200 1.800l-8.400 8.400"/></g><circle cx="6" cy="6" r="4.100" fill="#ffdc9c"/><circle cx="6" cy="6" r="3.400" fill="#ffcf72"/></svg><svg style="left:144px;top:185.91px" width="11" height="12" viewBox="0 0 11 12"><path d="M5.500 5v-2c0-2.600 4.600-2.600 4.600 0v1.200" fill="none" stroke="#dfc98a" stroke-width="1.500"/><rect x=".8" y="4.800" width="6.800" height="6" fill="#f1e6c2" stroke="#d6bd74" stroke-width="1.200"/><rect x="3.300" y="6.800" width="1.800" height="2" fill="#b08a2c"/></svg><svg style="left:174.800px;top:185.81px" width="13" height="12" viewBox="0 0 13 12"><path d="M3 4.500v-2.500c0-1 .6-1.500 1.500-1.500h3.500c.9 0 1.500.5 1.500 1.500v2.500" fill="#fff" stroke="#4a5060" stroke-width="1"/><rect x=".6" y="3.800" width="11.300" height="4.700" rx="2.200" fill="#e8ebf0" stroke="#3e4454" stroke-width="1.100"/><path d="M2.600 7h7.300v2.500c0 1-.6 1.500-1.500 1.500h-4.300c-.9 0-1.500-.5-1.500-1.500z" fill="#fff" stroke="#4a5060" stroke-width="1"/><path d="M3.500 9h5.500" stroke="#9aa8c0" stroke-width=".9"/></svg><svg style="left:200px;top:188.11px" width="8" height="8" viewBox="0 0 8 8"><rect x=".5" y=".5" width="7" height="7" fill="#18e8f8" stroke="#5a96e6" stroke-width=".9"/></svg><span class="t d" style="left:209.500px;top:185.71px">青色</span><svg style="left:267px;top:191.60px" width="24" height="1" viewBox="0 0 24 1"><path d="M0 .5h23.500" stroke="#fb2a2a" stroke-width="1" /></svg><span class="t d" style="left:296.900px;top:185.71px">实线</span><div style="left:32px;top:198.48px;width:38.500px;height:12px;overflow:hidden"><span class="t d" style="left:0;top:0"><i>QC_</i>尺寸线层</span></div><svg style="left:82.200px;top:198.18px" width="8" height="12" viewBox="0 0 8 12"><path d="M4 0.600c2.200 0 3.600 1.600 3.600 3.500 0 1.500-1 2.300-1.300 3.300-.1.400-.2.700-.2 1.100h-4.200c0-.4-.1-.7-.2-1.100-.3-1-1.300-1.800-1.300-3.300 0-1.900 1.400-3.500 3.600-3.500z" fill="#fbeaa0" stroke="#858585" stroke-width=".8"/><ellipse cx="3.300" cy="3.400" rx="1.300" ry="1.700" fill="#fffbe2"/><path d="M2.200 9.300h3.600M2.500 10.400h3" stroke="#444" stroke-width=".9"/><path d="M3 11.300h2" stroke="#333" stroke-width=".8"/></svg><svg style="left:112.100px;top:198.18px" width="12" height="12" viewBox="0 0 12 12"><g stroke="#fde3b4" stroke-width=".8"><path d="M6 0v12M0 6h12M1.800 1.800l8.400 8.400M10.200 1.800l-8.400 8.400"/></g><circle cx="6" cy="6" r="4.100" fill="#ffdc9c"/><circle cx="6" cy="6" r="3.400" fill="#ffcf72"/></svg><svg style="left:144px;top:198.68px" width="11" height="12" viewBox="0 0 11 12"><path d="M5.500 5v-2c0-2.600 4.600-2.600 4.600 0v1.200" fill="none" stroke="#dfc98a" stroke-width="1.500"/><rect x=".8" y="4.800" width="6.800" height="6" fill="#f1e6c2" stroke="#d6bd74" stroke-width="1.200"/><rect x="3.300" y="6.800" width="1.800" height="2" fill="#b08a2c"/></svg><svg style="left:174.800px;top:198.58px" width="13" height="12" viewBox="0 0 13 12"><path d="M3 4.500v-2.500c0-1 .6-1.500 1.500-1.500h3.500c.9 0 1.500.5 1.500 1.500v2.500" fill="#fff" stroke="#4a5060" stroke-width="1"/><rect x=".6" y="3.800" width="11.300" height="4.700" rx="2.200" fill="#e8ebf0" stroke="#3e4454" stroke-width="1.100"/><path d="M2.600 7h7.300v2.500c0 1-.6 1.500-1.500 1.500h-4.300c-.9 0-1.500-.5-1.500-1.500z" fill="#fff" stroke="#4a5060" stroke-width="1"/><path d="M3.500 9h5.500" stroke="#9aa8c0" stroke-width=".9"/></svg><svg style="left:200px;top:200.88px" width="8" height="8" viewBox="0 0 8 8"><rect x=".5" y=".5" width="7" height="7" fill="#16e016" stroke="#5a96e6" stroke-width=".9"/></svg><span class="t d" style="left:209.500px;top:198.48px">绿色</span><svg style="left:267px;top:204.60px" width="24" height="1" viewBox="0 0 24 1"><path d="M0 .5h23.500" stroke="#fb2a2a" stroke-width="1" /></svg><span class="t d" style="left:296.900px;top:198.48px">实线</span><div style="left:32px;top:211.25px;width:38.500px;height:12px;overflow:hidden"><span class="t d" style="left:0;top:0"><i>QC_</i>尺寸线层<i>_1</i></span></div><svg style="left:82.200px;top:210.95px" width="8" height="12" viewBox="0 0 8 12"><path d="M4 0.600c2.200 0 3.600 1.600 3.600 3.500 0 1.500-1 2.300-1.300 3.300-.1.400-.2.700-.2 1.100h-4.200c0-.4-.1-.7-.2-1.100-.3-1-1.300-1.800-1.300-3.300 0-1.900 1.400-3.500 3.600-3.500z" fill="#fbeaa0" stroke="#858585" stroke-width=".8"/><ellipse cx="3.300" cy="3.400" rx="1.300" ry="1.700" fill="#fffbe2"/><path d="M2.200 9.300h3.600M2.500 10.400h3" stroke="#444" stroke-width=".9"/><path d="M3 11.300h2" stroke="#333" stroke-width=".8"/></svg><svg style="left:112.100px;top:210.95px" width="12" height="12" viewBox="0 0 12 12"><g stroke="#fde3b4" stroke-width=".8"><path d="M6 0v12M0 6h12M1.800 1.800l8.400 8.400M10.200 1.800l-8.400 8.400"/></g><circle cx="6" cy="6" r="4.100" fill="#ffdc9c"/><circle cx="6" cy="6" r="3.400" fill="#ffcf72"/></svg><svg style="left:144px;top:211.45px" width="11" height="12" viewBox="0 0 11 12"><path d="M5.500 5v-2c0-2.600 4.600-2.600 4.600 0v1.200" fill="none" stroke="#dfc98a" stroke-width="1.500"/><rect x=".8" y="4.800" width="6.800" height="6" fill="#f1e6c2" stroke="#d6bd74" stroke-width="1.200"/><rect x="3.300" y="6.800" width="1.800" height="2" fill="#b08a2c"/></svg><svg style="left:174.800px;top:211.35px" width="13" height="12" viewBox="0 0 13 12"><path d="M3 4.500v-2.500c0-1 .6-1.500 1.500-1.500h3.500c.9 0 1.500.5 1.500 1.500v2.500" fill="#fff" stroke="#4a5060" stroke-width="1"/><rect x=".6" y="3.800" width="11.300" height="4.700" rx="2.200" fill="#e8ebf0" stroke="#3e4454" stroke-width="1.100"/><path d="M2.600 7h7.300v2.500c0 1-.6 1.500-1.500 1.500h-4.300c-.9 0-1.500-.5-1.500-1.500z" fill="#fff" stroke="#4a5060" stroke-width="1"/><path d="M3.500 9h5.500" stroke="#9aa8c0" stroke-width=".9"/></svg><svg style="left:200px;top:213.65px" width="8" height="8" viewBox="0 0 8 8"><rect x=".5" y=".5" width="7" height="7" fill="#111" stroke="#111" stroke-width=".8"/><path d="M1 2.500v4.500h4.500z" fill="#fff"/></svg><span class="t d" style="left:209.500px;top:211.25px"><i>(</i>黑白色<i>)</i></span><span class="t d" style="left:296.900px;top:211.25px">实线</span></div>
<div class="" style="left:0px;top:1px;width:1px;height:638px;background:#8f8f8f"></div>

</body></html>
